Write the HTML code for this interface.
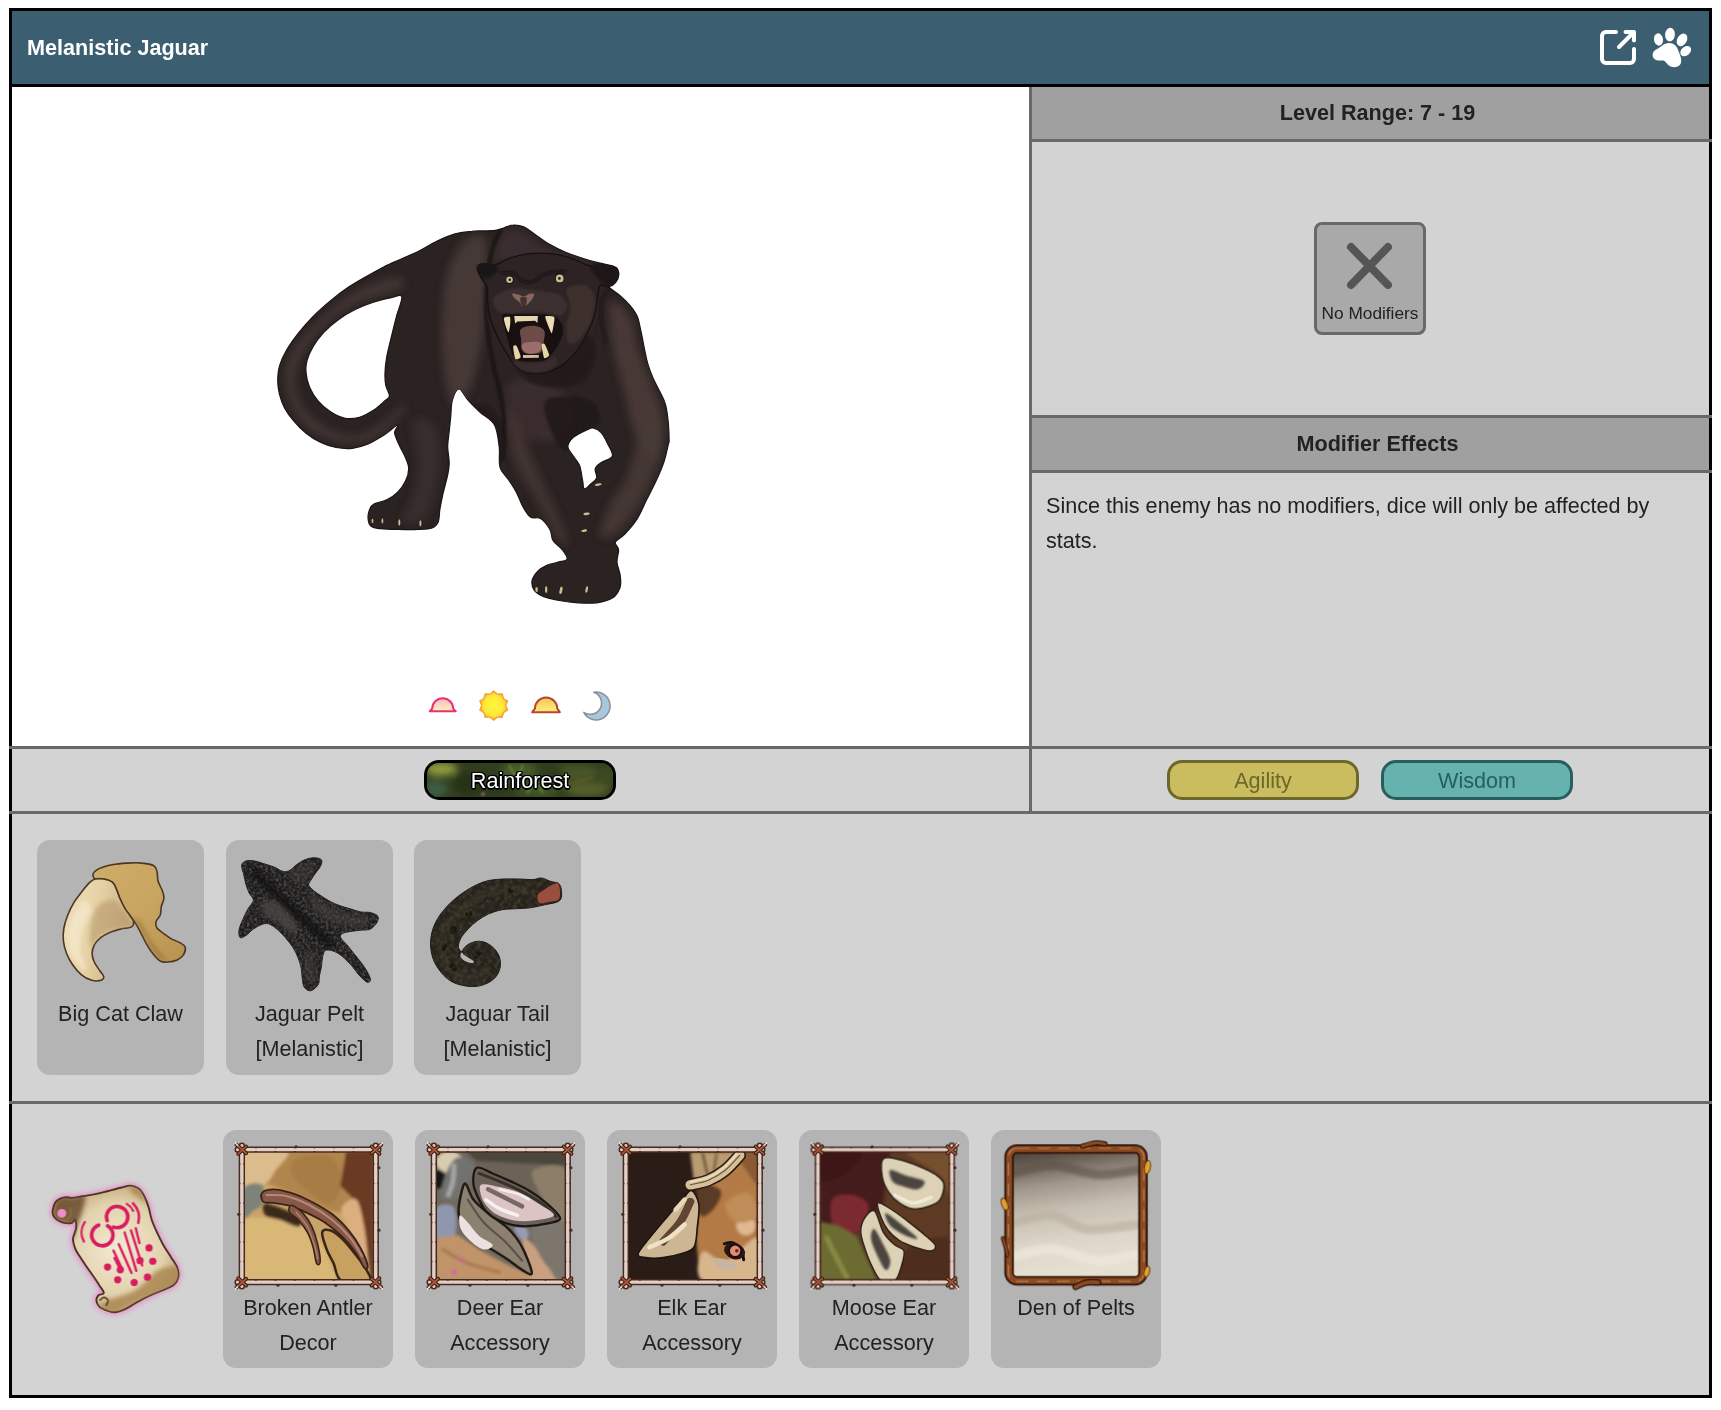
<!DOCTYPE html>
<html lang="en">
<head>
<meta charset="utf-8">
<title>Melanistic Jaguar</title>
<style>
*{box-sizing:border-box;margin:0;padding:0}
html,body{width:1721px;height:1410px;background:#fff;overflow:hidden}
body{font-family:"Liberation Sans",Arial,Helvetica,sans-serif;color:#222;position:relative}
.abs{position:absolute}
#frame{position:absolute;left:9px;top:8px;width:1703px;height:1390px;border:3px solid #000;background:#d3d3d3}
/* everything inside #inner is positioned in page coordinates via offset */
#inner{will-change:transform;position:absolute;left:-12px;top:-11px;width:1721px;height:1410px}
#hdr{left:12px;top:11px;width:1697px;height:76px;background:#3b5f71;border-bottom:3px solid #000}
#title{left:27px;top:11px;height:73px;line-height:73px;font-weight:bold;font-size:21.6px;color:#fff;white-space:nowrap}
#imgbox{left:12px;top:87px;width:1017px;height:659px;background:#fff}
.vline{left:1029px;top:87px;width:3px;height:724px;background:#696969}
.hline{height:3px;background:#696969}
.ghead{left:1032px;width:677px;height:52px;background:#a0a0a0;font-weight:bold;font-size:21.6px;line-height:52px;color:#222}
.ghead span{position:absolute;left:0;width:691px;text-align:center;white-space:nowrap}
#nomod{left:1314px;top:222px;width:112px;height:113px;border:3px solid #696969;border-radius:8px;background:#a9a9a9}
#nomod div{position:absolute;left:-10px;width:126px;top:76px;text-align:center;font-size:17.28px;line-height:24px;white-space:nowrap;color:#222}
#efftext{left:1046px;top:488px;width:648px;font-size:21.6px;line-height:35px;color:#222}
.badge{top:760px;width:192px;height:40px;border:3px solid #000;border-radius:15px;font-size:21.6px;line-height:36px;text-align:center;overflow:hidden}
.card{background:#b4b4b4;border-radius:13px}
.card .lbl{position:absolute;left:-10px;right:-10px;text-align:center;font-size:21.6px;line-height:35px;color:#222}
</style>
</head>
<body>
<div id="frame"><div id="inner">

<div id="hdr" class="abs"></div>
<div id="title" class="abs">Melanistic Jaguar</div>

<div id="imgbox" class="abs"></div>
<!--JAG-->
<svg class="abs" style="left:262px;top:212px" width="420" height="400" viewBox="262 212 420 400">
<defs>
<clipPath id="jc"><path d="M504.3 227.7C507.3 226.8 509.9 225.2 513.2 225.1C516.4 224.9 520.3 225.4 523.8 226.8C527.4 228.3 530.3 231.1 534.4 233.9C538.6 236.7 543.3 240.6 548.6 243.7C553.9 246.8 560.4 250.0 566.3 252.5C572.3 255.0 578.5 257.0 584.1 258.7C589.7 260.5 595.3 262.0 600.0 263.2C604.7 264.4 609.5 264.8 612.4 265.8C615.4 266.9 616.9 267.5 617.7 269.4C618.6 271.3 618.6 274.8 617.7 277.4C616.9 279.9 613.9 282.8 612.4 284.4C611.0 286.1 607.7 285.3 608.9 287.1C610.1 288.9 616.0 292.0 619.5 295.1C623.1 298.2 627.2 302.2 630.2 305.7C633.1 309.3 635.5 312.2 637.2 316.3C639.0 320.5 639.6 325.2 640.8 330.5C642.0 335.8 643.2 342.6 644.3 348.2C645.5 353.9 646.4 359.2 647.9 364.2C649.4 369.2 651.1 373.7 653.2 378.4C655.3 383.1 658.2 388.1 660.3 392.6C662.4 397.0 664.3 399.9 665.6 405.0C666.9 410.0 667.7 416.8 668.3 422.7C668.9 428.6 669.1 436.9 669.1 440.4C669.2 443.9 669.4 440.0 668.5 443.7C667.6 447.3 665.9 456.2 663.8 462.4C661.7 468.6 658.9 474.9 656.0 481.1C653.1 487.4 649.8 493.6 646.6 499.8C643.5 506.1 640.9 512.8 637.3 518.6C633.6 524.3 628.4 530.3 624.8 534.2C621.2 538.1 616.5 539.4 615.4 542.0C614.4 544.6 618.3 546.4 618.6 549.8C618.8 553.1 616.7 558.1 617.0 562.2C617.3 566.4 619.6 570.6 620.1 574.7C620.6 578.9 621.4 583.3 620.1 587.2C618.8 591.1 616.2 595.5 612.3 598.1C608.4 600.7 602.4 602.0 596.7 602.8C591.0 603.6 584.2 603.2 578.0 602.8C571.8 602.4 565.0 601.5 559.3 600.5C553.6 599.4 547.8 598.3 543.7 596.6C539.5 594.9 536.3 592.9 534.3 590.3C532.4 587.7 531.5 584.1 532.0 581.0C532.5 577.8 535.0 574.2 537.4 571.6C539.9 569.0 543.4 566.9 546.8 565.4C550.2 563.8 554.3 563.3 557.7 562.2C561.1 561.2 566.3 561.2 567.1 559.1C567.9 557.0 564.7 552.9 562.4 549.8C560.1 546.6 555.1 543.8 553.0 540.4C551.0 537.0 552.0 533.1 549.9 529.5C547.8 525.8 543.8 520.6 540.6 518.6C537.3 516.5 533.4 519.1 530.4 517.0C527.4 515.0 524.9 510.3 522.6 506.1C520.2 502.0 518.7 496.5 516.3 492.1C514.0 487.7 511.3 483.7 508.5 479.6C505.8 475.4 501.5 472.6 500.0 467.1C498.4 461.6 500.1 453.8 499.2 446.8C498.3 439.8 497.6 430.7 494.5 425.0C491.4 419.2 484.9 416.6 480.4 412.5C476.0 408.3 471.5 403.9 468.0 400.0C464.4 396.1 461.6 389.0 459.0 389.0C456.4 389.0 453.7 395.6 452.4 400.0C451.0 404.4 451.3 410.4 450.8 415.6C450.3 420.8 449.8 426.0 449.2 431.2C448.7 436.4 447.7 441.6 447.7 446.8C447.7 452.0 449.2 457.7 449.2 462.4C449.2 467.1 448.7 469.7 447.7 474.9C446.6 480.1 444.3 487.9 443.0 493.6C441.7 499.4 440.7 504.6 439.9 509.2C439.1 513.9 439.6 518.6 438.3 521.7C437.0 524.8 435.5 526.7 432.1 528.0C428.7 529.3 423.5 529.3 418.0 529.5C412.6 529.8 405.5 529.7 399.3 529.5C393.1 529.4 385.3 529.3 380.6 528.7C375.9 528.2 373.3 528.1 371.2 526.4C369.1 524.7 368.3 521.5 368.1 518.6C367.8 515.7 368.6 511.7 369.7 509.2C370.7 506.8 371.5 505.3 374.3 503.8C377.2 502.2 382.9 501.8 386.8 499.9C390.7 497.9 394.6 495.2 397.7 492.1C400.9 489.0 403.7 485.0 405.5 481.1C407.4 477.2 408.7 472.6 408.7 468.7C408.7 464.8 407.1 461.6 405.5 457.7C404.0 453.8 401.1 449.4 399.3 445.3C397.5 441.1 394.8 436.2 394.6 432.8C394.4 429.3 400.0 424.1 398.2 424.5C396.5 424.9 389.1 431.8 384.1 435.1C379.0 438.3 373.4 441.7 368.1 444.0C362.8 446.2 357.5 447.8 352.2 448.4C346.8 449.0 341.5 448.5 336.2 447.5C330.9 446.5 325.3 444.6 320.3 442.2C315.2 439.8 310.5 436.9 306.1 433.3C301.7 429.8 297.2 425.1 293.7 420.9C290.1 416.8 287.2 412.9 284.8 408.5C282.5 404.1 280.7 399.1 279.5 394.3C278.3 389.6 277.7 384.9 277.7 380.2C277.7 375.4 278.0 371.0 279.5 366.0C281.0 361.0 283.3 355.6 286.6 350.0C289.8 344.4 294.6 337.9 299.0 332.3C303.4 326.7 307.9 321.7 313.2 316.3C318.5 311.0 325.0 305.3 330.9 300.4C336.8 295.5 342.7 291.1 348.6 287.1C354.5 283.1 360.4 279.9 366.3 276.5C372.3 273.1 378.2 269.7 384.1 266.7C390.0 263.8 395.9 261.4 401.8 258.7C407.7 256.1 413.6 253.7 419.5 250.8C425.4 247.8 431.3 243.8 437.2 241.0C443.2 238.2 449.1 235.6 455.0 233.9C460.9 232.3 468.9 231.8 472.7 231.3C476.5 230.8 473.9 231.1 477.7 230.9C481.5 230.8 491.0 230.9 495.4 230.4C499.9 229.9 501.4 228.6 504.3 227.7ZM401.8 296.8C402.7 300.0 398.2 309.6 396.5 316.3C394.7 323.1 392.8 330.8 391.2 337.6C389.5 344.4 387.8 351.2 386.7 357.1C385.7 363.0 385.1 368.3 385.0 373.1C384.8 377.8 385.1 381.6 385.8 385.5C386.6 389.3 389.7 393.4 389.4 396.1C389.1 398.8 386.7 399.1 384.1 401.4C381.4 403.8 377.6 407.6 373.4 410.3C369.3 412.9 364.0 416.0 359.3 417.4C354.5 418.7 349.8 419.1 345.1 418.3C340.3 417.4 335.3 414.9 330.9 412.1C326.5 409.2 322.0 405.6 318.5 401.4C314.9 397.3 311.7 392.0 309.6 387.2C307.6 382.5 306.5 377.5 306.1 373.1C305.6 368.6 305.8 365.1 307.0 360.7C308.2 356.2 310.4 351.2 313.2 346.5C316.0 341.7 319.7 336.7 323.8 332.3C327.9 327.9 332.7 323.7 338.0 319.9C343.3 316.0 349.8 312.2 355.7 309.3C361.6 306.3 367.5 304.1 373.4 302.2C379.3 300.2 386.4 298.6 391.2 297.7C395.9 296.8 400.9 293.7 401.8 296.8ZM587.4 429.6C584.0 431.2 576.6 434.6 573.3 437.4C570.1 440.3 567.9 443.7 567.9 446.8C567.9 449.9 571.4 453.0 573.3 456.2C575.3 459.3 578.0 461.4 579.6 465.5C581.1 469.7 581.9 477.2 582.7 481.1C583.5 485.0 582.9 488.4 584.2 488.9C585.5 489.4 588.4 486.1 590.5 484.2C592.6 482.4 595.9 480.6 596.7 478.0C597.5 475.4 594.4 471.2 595.2 468.6C595.9 466.0 598.5 464.5 601.4 462.4C604.3 460.3 611.3 459.3 612.3 456.2C613.4 453.0 609.5 447.6 607.6 443.7C605.8 439.8 603.7 435.4 601.4 432.8C599.1 430.2 595.9 428.6 593.6 428.1C591.3 427.6 590.7 428.1 587.4 429.6Z" clip-rule="evenodd"/></clipPath>
<filter id="jb" x="-20%" y="-20%" width="140%" height="140%"><feGaussianBlur stdDeviation="4"/></filter>
<filter id="jb2" x="-20%" y="-20%" width="140%" height="140%"><feGaussianBlur stdDeviation="1.2"/></filter>
</defs>
<path d="M504.3 227.7C507.3 226.8 509.9 225.2 513.2 225.1C516.4 224.9 520.3 225.4 523.8 226.8C527.4 228.3 530.3 231.1 534.4 233.9C538.6 236.7 543.3 240.6 548.6 243.7C553.9 246.8 560.4 250.0 566.3 252.5C572.3 255.0 578.5 257.0 584.1 258.7C589.7 260.5 595.3 262.0 600.0 263.2C604.7 264.4 609.5 264.8 612.4 265.8C615.4 266.9 616.9 267.5 617.7 269.4C618.6 271.3 618.6 274.8 617.7 277.4C616.9 279.9 613.9 282.8 612.4 284.4C611.0 286.1 607.7 285.3 608.9 287.1C610.1 288.9 616.0 292.0 619.5 295.1C623.1 298.2 627.2 302.2 630.2 305.7C633.1 309.3 635.5 312.2 637.2 316.3C639.0 320.5 639.6 325.2 640.8 330.5C642.0 335.8 643.2 342.6 644.3 348.2C645.5 353.9 646.4 359.2 647.9 364.2C649.4 369.2 651.1 373.7 653.2 378.4C655.3 383.1 658.2 388.1 660.3 392.6C662.4 397.0 664.3 399.9 665.6 405.0C666.9 410.0 667.7 416.8 668.3 422.7C668.9 428.6 669.1 436.9 669.1 440.4C669.2 443.9 669.4 440.0 668.5 443.7C667.6 447.3 665.9 456.2 663.8 462.4C661.7 468.6 658.9 474.9 656.0 481.1C653.1 487.4 649.8 493.6 646.6 499.8C643.5 506.1 640.9 512.8 637.3 518.6C633.6 524.3 628.4 530.3 624.8 534.2C621.2 538.1 616.5 539.4 615.4 542.0C614.4 544.6 618.3 546.4 618.6 549.8C618.8 553.1 616.7 558.1 617.0 562.2C617.3 566.4 619.6 570.6 620.1 574.7C620.6 578.9 621.4 583.3 620.1 587.2C618.8 591.1 616.2 595.5 612.3 598.1C608.4 600.7 602.4 602.0 596.7 602.8C591.0 603.6 584.2 603.2 578.0 602.8C571.8 602.4 565.0 601.5 559.3 600.5C553.6 599.4 547.8 598.3 543.7 596.6C539.5 594.9 536.3 592.9 534.3 590.3C532.4 587.7 531.5 584.1 532.0 581.0C532.5 577.8 535.0 574.2 537.4 571.6C539.9 569.0 543.4 566.9 546.8 565.4C550.2 563.8 554.3 563.3 557.7 562.2C561.1 561.2 566.3 561.2 567.1 559.1C567.9 557.0 564.7 552.9 562.4 549.8C560.1 546.6 555.1 543.8 553.0 540.4C551.0 537.0 552.0 533.1 549.9 529.5C547.8 525.8 543.8 520.6 540.6 518.6C537.3 516.5 533.4 519.1 530.4 517.0C527.4 515.0 524.9 510.3 522.6 506.1C520.2 502.0 518.7 496.5 516.3 492.1C514.0 487.7 511.3 483.7 508.5 479.6C505.8 475.4 501.5 472.6 500.0 467.1C498.4 461.6 500.1 453.8 499.2 446.8C498.3 439.8 497.6 430.7 494.5 425.0C491.4 419.2 484.9 416.6 480.4 412.5C476.0 408.3 471.5 403.9 468.0 400.0C464.4 396.1 461.6 389.0 459.0 389.0C456.4 389.0 453.7 395.6 452.4 400.0C451.0 404.4 451.3 410.4 450.8 415.6C450.3 420.8 449.8 426.0 449.2 431.2C448.7 436.4 447.7 441.6 447.7 446.8C447.7 452.0 449.2 457.7 449.2 462.4C449.2 467.1 448.7 469.7 447.7 474.9C446.6 480.1 444.3 487.9 443.0 493.6C441.7 499.4 440.7 504.6 439.9 509.2C439.1 513.9 439.6 518.6 438.3 521.7C437.0 524.8 435.5 526.7 432.1 528.0C428.7 529.3 423.5 529.3 418.0 529.5C412.6 529.8 405.5 529.7 399.3 529.5C393.1 529.4 385.3 529.3 380.6 528.7C375.9 528.2 373.3 528.1 371.2 526.4C369.1 524.7 368.3 521.5 368.1 518.6C367.8 515.7 368.6 511.7 369.7 509.2C370.7 506.8 371.5 505.3 374.3 503.8C377.2 502.2 382.9 501.8 386.8 499.9C390.7 497.9 394.6 495.2 397.7 492.1C400.9 489.0 403.7 485.0 405.5 481.1C407.4 477.2 408.7 472.6 408.7 468.7C408.7 464.8 407.1 461.6 405.5 457.7C404.0 453.8 401.1 449.4 399.3 445.3C397.5 441.1 394.8 436.2 394.6 432.8C394.4 429.3 400.0 424.1 398.2 424.5C396.5 424.9 389.1 431.8 384.1 435.1C379.0 438.3 373.4 441.7 368.1 444.0C362.8 446.2 357.5 447.8 352.2 448.4C346.8 449.0 341.5 448.5 336.2 447.5C330.9 446.5 325.3 444.6 320.3 442.2C315.2 439.8 310.5 436.9 306.1 433.3C301.7 429.8 297.2 425.1 293.7 420.9C290.1 416.8 287.2 412.9 284.8 408.5C282.5 404.1 280.7 399.1 279.5 394.3C278.3 389.6 277.7 384.9 277.7 380.2C277.7 375.4 278.0 371.0 279.5 366.0C281.0 361.0 283.3 355.6 286.6 350.0C289.8 344.4 294.6 337.9 299.0 332.3C303.4 326.7 307.9 321.7 313.2 316.3C318.5 311.0 325.0 305.3 330.9 300.4C336.8 295.5 342.7 291.1 348.6 287.1C354.5 283.1 360.4 279.9 366.3 276.5C372.3 273.1 378.2 269.7 384.1 266.7C390.0 263.8 395.9 261.4 401.8 258.7C407.7 256.1 413.6 253.7 419.5 250.8C425.4 247.8 431.3 243.8 437.2 241.0C443.2 238.2 449.1 235.6 455.0 233.9C460.9 232.3 468.9 231.8 472.7 231.3C476.5 230.8 473.9 231.1 477.7 230.9C481.5 230.8 491.0 230.9 495.4 230.4C499.9 229.9 501.4 228.6 504.3 227.7ZM401.8 296.8C402.7 300.0 398.2 309.6 396.5 316.3C394.7 323.1 392.8 330.8 391.2 337.6C389.5 344.4 387.8 351.2 386.7 357.1C385.7 363.0 385.1 368.3 385.0 373.1C384.8 377.8 385.1 381.6 385.8 385.5C386.6 389.3 389.7 393.4 389.4 396.1C389.1 398.8 386.7 399.1 384.1 401.4C381.4 403.8 377.6 407.6 373.4 410.3C369.3 412.9 364.0 416.0 359.3 417.4C354.5 418.7 349.8 419.1 345.1 418.3C340.3 417.4 335.3 414.9 330.9 412.1C326.5 409.2 322.0 405.6 318.5 401.4C314.9 397.3 311.7 392.0 309.6 387.2C307.6 382.5 306.5 377.5 306.1 373.1C305.6 368.6 305.8 365.1 307.0 360.7C308.2 356.2 310.4 351.2 313.2 346.5C316.0 341.7 319.7 336.7 323.8 332.3C327.9 327.9 332.7 323.7 338.0 319.9C343.3 316.0 349.8 312.2 355.7 309.3C361.6 306.3 367.5 304.1 373.4 302.2C379.3 300.2 386.4 298.6 391.2 297.7C395.9 296.8 400.9 293.7 401.8 296.8ZM587.4 429.6C584.0 431.2 576.6 434.6 573.3 437.4C570.1 440.3 567.9 443.7 567.9 446.8C567.9 449.9 571.4 453.0 573.3 456.2C575.3 459.3 578.0 461.4 579.6 465.5C581.1 469.7 581.9 477.2 582.7 481.1C583.5 485.0 582.9 488.4 584.2 488.9C585.5 489.4 588.4 486.1 590.5 484.2C592.6 482.4 595.9 480.6 596.7 478.0C597.5 475.4 594.4 471.2 595.2 468.6C595.9 466.0 598.5 464.5 601.4 462.4C604.3 460.3 611.3 459.3 612.3 456.2C613.4 453.0 609.5 447.6 607.6 443.7C605.8 439.8 603.7 435.4 601.4 432.8C599.1 430.2 595.9 428.6 593.6 428.1C591.3 427.6 590.7 428.1 587.4 429.6Z" fill="#2b2222" fill-rule="evenodd" stroke="#1b1415" stroke-width="1.2" stroke-linejoin="round"/>
<g clip-path="url(#jc)">
<g filter="url(#jb)"><path d="M463.5 241.9C470.0 234.8 481.0 231.9 484.8 238.4C488.7 244.9 486.9 264.9 486.6 280.9C486.3 296.8 485.7 316.3 483.0 334.1C480.4 351.8 475.7 375.4 470.6 387.2C465.6 399.1 457.6 410.9 452.9 405.0C448.2 399.1 443.5 372.5 442.3 351.8C441.1 331.1 442.3 299.2 445.8 280.9C449.4 262.6 457.0 249.0 463.5 241.9Z" fill="#483a38" opacity="0.9"/><path d="M610.7 302.2C613.6 297.4 625.4 308.1 630.2 316.3C634.9 324.6 635.2 340.0 639.0 351.8C642.9 363.6 649.1 375.4 653.2 387.2C657.3 399.1 662.9 410.9 663.8 422.7C664.7 434.5 662.9 455.2 658.5 458.1C654.1 461.1 643.2 452.2 637.2 440.4C631.3 428.6 627.2 403.2 623.1 387.2C618.9 371.3 614.5 358.9 612.4 344.7C610.4 330.5 607.7 306.9 610.7 302.2Z" fill="#4a3b38" opacity="0.9"/><path d="M506.1 387.2C508.7 378.4 524.4 376.9 534.4 378.4C544.5 379.9 559.8 388.7 566.3 396.1C572.8 403.5 575.8 415.3 573.4 422.7C571.1 430.1 561.3 438.9 552.2 440.4C543.0 441.9 526.2 440.4 518.5 431.6C510.8 422.7 503.4 396.1 506.1 387.2Z" fill="#3e3030" opacity="0.8"/><path d="M500.8 234.8C504.6 229.5 511.4 227.7 518.5 229.5C525.6 231.3 534.7 240.7 543.3 245.4C551.9 250.2 561.3 254.3 569.9 257.9C578.5 261.4 592.3 262.3 594.7 266.7C597.1 271.1 591.7 284.1 584.1 284.4C576.4 284.7 560.4 272.0 548.6 268.5C536.8 264.9 522.0 264.4 513.2 263.2C504.3 262.0 497.5 266.1 495.4 261.4C493.4 256.7 496.9 240.1 500.8 234.8Z" fill="#3d3132" opacity="0.8"/><path d="M566.3 289.8C571.1 285.0 587.6 287.7 591.2 295.1C594.7 302.5 591.2 324.0 587.6 334.1C584.1 344.1 574.0 357.1 569.9 355.3C565.8 353.6 563.4 334.4 562.8 323.4C562.2 312.5 561.6 294.5 566.3 289.8Z" fill="#3f3131" opacity="0.8"/><path d="M318.5 319.9C327.4 311.9 339.5 300.4 352.2 293.3C364.9 286.2 386.4 278.2 394.7 277.4C403.0 276.5 407.7 283.9 401.8 288.0C395.9 292.1 371.7 296.3 359.3 302.2C346.8 308.1 336.5 315.2 327.4 323.4C318.2 331.7 309.6 342.3 304.3 351.8C299.0 361.2 295.4 370.7 295.4 380.2C295.4 389.6 298.4 400.2 304.3 408.5C310.2 416.8 321.7 425.3 330.9 429.8C340.1 434.2 349.8 436.9 359.3 435.1C368.7 433.3 380.2 424.5 387.6 419.1C395.0 413.8 401.2 404.1 403.6 403.2C405.9 402.3 406.8 407.9 401.8 413.8C396.8 419.7 383.5 433.9 373.4 438.6C363.4 443.4 352.5 444.0 341.5 442.2C330.6 440.4 316.7 435.4 307.9 428.0C299.0 420.6 291.9 408.2 288.4 397.9C284.8 387.5 284.8 375.4 286.6 366.0C288.4 356.5 293.7 348.8 299.0 341.2C304.3 333.5 309.6 327.9 318.5 319.9Z" fill="#473937" opacity="0.85"/><path d="M505.4 409.4C506.5 403.6 516.1 418.7 521.0 428.1C526.0 437.5 529.3 452.0 535.1 465.5C540.8 479.1 549.9 496.8 555.4 509.2C560.8 521.7 567.3 535.2 567.8 540.4C568.4 545.7 563.7 547.2 558.5 540.4C553.3 533.7 543.9 512.9 536.6 499.9C529.3 486.9 520.0 477.5 514.8 462.4C509.6 447.3 504.4 415.1 505.4 409.4Z" fill="#443634" opacity="0.85"/><path d="M640.4 431.2C645.6 422.9 655.5 421.8 659.1 425.0C662.8 428.1 663.8 440.0 662.2 449.9C660.7 459.8 654.4 473.8 649.8 484.2C645.1 494.6 639.9 504.0 634.2 512.3C628.4 520.6 621.2 530.5 615.4 534.2C609.7 537.8 600.4 539.9 599.8 534.2C599.3 528.4 607.6 509.7 612.3 499.8C617.0 490.0 623.2 486.3 627.9 474.9C632.6 463.4 635.2 439.5 640.4 431.2Z" fill="#483937" opacity="0.85"/><path d="M413.3 421.8C415.9 415.6 429.2 418.7 433.6 425.0C438.1 431.2 439.9 447.3 439.9 459.3C439.9 471.3 436.2 486.9 433.6 496.8C431.0 506.6 429.5 514.4 424.3 518.6C419.1 522.8 404.2 525.9 402.4 521.7C400.6 517.6 410.7 503.5 413.3 493.6C415.9 483.7 418.0 474.4 418.0 462.4C418.0 450.5 410.7 428.1 413.3 421.8Z" fill="#3c2f2f" opacity="0.8"/></g>
<g filter="url(#jb2)"><path d="M500.8 229.5C499.3 233.0 494.3 241.6 491.9 250.8C489.5 259.9 487.5 272.3 486.6 284.4C485.7 296.6 485.4 309.8 486.6 323.4C487.8 337.0 491.0 352.4 493.7 366.0C496.3 379.6 500.8 392.6 502.5 405.0C504.3 417.4 504.3 431.3 504.3 440.4C504.3 449.6 502.8 456.7 502.5 459.9" stroke="#171112" stroke-width="3" fill="none" opacity="0.9"/><path d="M608.9 288.0C607.7 290.3 603.0 296.3 601.8 302.2C600.6 308.1 600.9 316.3 601.8 323.4C602.7 330.5 606.2 341.2 607.1 344.7" stroke="#1a1314" stroke-width="2" fill="none" opacity="0.7"/><path d="M518.5 364.2C521.1 362.1 535.3 369.2 543.3 367.7C551.3 366.3 559.6 361.0 566.3 355.3C573.1 349.7 579.3 334.7 584.1 334.1C588.8 333.5 594.7 344.1 594.7 351.8C594.7 359.5 591.2 374.2 584.1 380.2C577.0 386.1 561.6 387.2 552.2 387.2C542.7 387.2 533.0 384.0 527.4 380.2C521.7 376.3 515.8 366.3 518.5 364.2Z" fill="#1f1718" opacity="0.8"/><path d="M460.0 419.1C461.8 410.0 474.5 404.4 481.3 405.0C488.1 405.6 497.2 413.5 500.8 422.7C504.3 431.8 507.6 453.7 502.5 459.9C497.5 466.1 477.7 466.7 470.6 459.9C463.5 453.1 458.2 428.3 460.0 419.1Z" fill="#1e1617" opacity="0.8"/><path d="M546.8 400.0C552.8 394.8 578.5 396.9 587.4 400.0C596.2 403.1 599.8 414.0 599.8 418.7C599.8 423.4 592.0 425.2 587.4 428.1C582.7 430.9 575.4 432.2 571.8 435.9C568.1 439.5 568.9 450.7 565.5 449.9C562.1 449.1 554.6 439.5 551.5 431.2C548.4 422.9 540.8 405.2 546.8 400.0Z" fill="#1c1516" opacity="0.85"/></g>
</g>
<path d="M477.4 267.7C477.7 265.3 480.2 264.3 483.0 263.9C485.8 263.6 489.8 266.3 494.2 265.3C498.5 264.4 503.2 260.3 509.0 258.4C514.9 256.4 522.7 254.5 529.5 253.7C536.3 252.9 543.4 253.1 550.0 253.7C556.5 254.3 561.9 255.4 568.5 257.4C575.2 259.5 584.7 264.6 589.9 265.8C595.2 267.0 596.0 264.6 600.2 264.9C604.3 265.2 611.9 266.1 615.0 267.7C618.1 269.2 618.7 271.7 618.8 274.2C618.8 276.7 617.2 280.4 615.5 282.5C613.8 284.6 611.1 286.3 608.5 286.7C606.0 287.2 602.0 283.4 600.2 285.3C598.3 287.3 598.3 293.4 597.4 298.3C596.4 303.3 596.3 309.2 594.6 315.1C592.9 321.0 590.6 327.2 587.1 333.7C583.7 340.2 578.8 348.5 574.1 354.1C569.5 359.7 564.2 364.0 559.3 367.1C554.3 370.2 549.6 371.8 544.4 372.7C539.1 373.7 532.3 373.7 527.6 372.7C523.0 371.8 519.9 370.2 516.5 367.1C513.1 364.0 510.3 359.1 507.2 354.1C504.1 349.2 500.7 343.3 497.9 337.4C495.1 331.5 492.2 324.7 490.5 318.8C488.7 312.9 488.2 307.3 487.7 302.1C487.1 296.8 488.3 291.2 487.2 287.2C486.1 283.2 482.8 281.1 481.2 277.9C479.5 274.6 477.1 270.0 477.4 267.7Z" fill="#2d2324" stroke="#171011" stroke-width="1.3"/>
<g clip-path="url(#jc)"><g filter="url(#jb2)"><path d="M493.2 298.3C494.8 294.8 502.4 291.5 507.2 290.0C512.0 288.4 516.5 288.9 522.1 289.0C527.6 289.2 534.5 290.0 540.7 290.9C546.9 291.8 554.9 292.1 559.3 294.6C563.6 297.1 566.4 302.4 566.7 305.8C567.0 309.2 564.8 314.0 561.1 315.1C557.4 316.2 550.3 312.8 544.4 312.3C538.5 311.8 531.7 312.1 525.8 312.3C519.9 312.4 513.7 313.4 509.0 313.2C504.4 313.1 500.5 313.8 497.9 311.4C495.3 308.9 491.7 301.9 493.2 298.3Z" fill="#3f3232" opacity="0.9"/><path d="M566.7 289.0C569.2 285.3 580.6 283.8 585.3 285.3C589.9 286.9 593.7 292.5 594.6 298.3C595.5 304.2 593.3 313.8 590.9 320.7C588.4 327.5 583.4 335.5 579.7 339.3C576.0 343.0 570.7 345.5 568.5 343.0C566.4 340.5 566.4 330.3 566.7 324.4C567.0 318.5 570.4 313.5 570.4 307.6C570.4 301.8 564.2 292.8 566.7 289.0Z" fill="#40322f" opacity="0.85"/><path d="M514.6 360.6C516.8 360.1 524.2 362.9 529.5 363.0C534.8 363.0 542.2 362.3 546.2 361.1C550.3 359.9 551.8 355.6 553.7 356.0C555.5 356.4 558.9 360.8 557.4 363.4C555.8 366.1 549.3 370.4 544.4 371.8C539.4 373.2 532.3 372.7 527.6 371.8C523.0 370.9 518.7 368.1 516.5 366.2C514.3 364.4 512.5 361.2 514.6 360.6Z" fill="#3a2e2e" opacity="0.9"/><path d="M477.4 267.2C477.6 264.9 480.2 264.2 483.0 263.9C485.8 263.7 491.7 264.8 494.2 265.8C496.7 266.8 498.7 268.1 497.9 270.0C497.1 271.8 492.2 275.6 489.5 277.0C486.9 278.3 484.1 279.5 482.1 277.9C480.1 276.3 477.3 269.5 477.4 267.2Z" fill="#191213"/><path d="M589.9 267.2C590.9 265.8 596.0 265.0 600.2 265.1C604.3 265.2 612.0 266.3 615.0 267.9C618.1 269.4 618.6 271.9 618.6 274.4C618.6 276.8 616.9 280.5 615.0 282.5C613.2 284.6 610.1 286.7 607.6 286.4C605.1 286.2 602.3 283.3 600.2 281.1C598.0 278.9 596.3 275.6 594.6 273.2C592.9 270.9 589.0 268.6 589.9 267.2Z" fill="#1c1415"/><path d="M500.7 273.2C502.8 273.2 510.1 272.0 513.7 273.2C517.3 274.5 518.8 279.3 522.1 280.7C525.3 282.1 529.5 282.7 533.2 281.6C536.9 280.5 538.8 275.9 544.4 274.2C550.0 272.5 563.0 271.8 566.7 271.4" stroke="#130e0e" stroke-width="2.2" fill="none" opacity="0.8"/></g></g>
<path d="M502.5 315.1C504.2 312.9 510.4 314.3 514.6 314.2C518.8 314.0 523.3 314.2 527.6 314.2C532.0 314.2 536.3 313.8 540.7 314.2C545.0 314.5 550.3 314.6 553.7 316.0C557.1 317.4 559.6 319.9 561.1 322.5C562.7 325.2 563.3 328.4 563.0 331.8C562.7 335.2 561.1 339.3 559.3 343.0C557.4 346.7 554.3 351.2 551.8 354.1C549.3 357.1 548.1 359.4 544.4 360.6C540.7 361.9 534.2 361.7 529.5 361.6C524.9 361.4 519.6 361.6 516.5 359.7C513.4 357.8 512.5 354.0 510.9 350.4C509.4 346.8 508.3 342.2 507.2 338.3C506.1 334.4 505.2 331.0 504.4 327.2C503.6 323.3 500.8 317.2 502.5 315.1Z" fill="#170f10"/>
<path d="M520.2 330.0C521.3 327.8 524.9 326.9 527.6 326.2C530.4 325.6 534.2 325.5 536.9 326.2C539.7 327.0 543.3 328.1 544.4 330.9C545.5 333.7 544.1 339.4 543.4 343.0C542.8 346.5 543.0 350.4 540.7 352.3C538.3 354.1 532.6 354.4 529.5 354.1C526.4 353.8 523.5 352.9 522.1 350.4C520.7 347.9 521.4 342.7 521.1 339.3C520.8 335.8 519.1 332.1 520.2 330.0Z" fill="#6c4b49"/><path d="M522.5 343.9C523.9 342.6 528.3 342.2 531.4 342.0C534.4 341.9 539.3 341.4 540.7 343.0C542.1 344.5 541.6 349.6 539.7 351.3C537.9 353.1 532.3 353.9 529.5 353.7C526.7 353.4 524.2 351.6 523.0 349.9C521.8 348.3 521.1 345.2 522.5 343.9Z" fill="#9a6c6a"/>
<path d="M514.2 316.0L537.9 316.0L537.4 323.0L535.1 320.7L517.4 321.4L515.1 323.6Z" fill="#e6d6ad"/><path d="M523.0 355.1L538.8 354.9L538.8 357.8L523.0 358.0Z" fill="#cdbf9d"/>
<path d="M503.9 317.9C504.3 316.8 509.4 316.3 510.0 316.9C510.6 317.6 510.3 322.8 510.2 324.4C510.0 325.9 509.0 332.0 508.6 332.3C508.2 332.6 506.5 328.6 506.1 327.2C505.6 325.7 503.5 318.9 503.9 317.9Z" fill="#ecdcb2"/><path d="M545.3 316.5C545.8 315.5 553.3 316.1 554.1 316.9C555.0 317.7 553.9 322.8 553.7 324.4C553.4 326.0 552.3 332.9 551.8 333.2C551.3 333.5 549.5 328.8 548.8 327.2C548.2 325.5 544.8 317.5 545.3 316.5Z" fill="#ecdcb2"/><path d="M513.2 346.7C513.3 345.4 515.7 344.7 516.5 345.8C517.2 346.8 520.8 355.6 520.7 356.9C520.6 358.2 516.1 360.0 515.4 359.0C514.6 357.9 513.1 348.0 513.2 346.7Z" fill="#e6d4a8"/><path d="M541.6 344.8C541.6 343.4 543.8 342.9 544.6 343.9C545.3 344.9 549.2 353.6 549.2 355.1C549.2 356.5 545.0 359.1 544.2 358.0C543.4 357.0 541.6 346.2 541.6 344.8Z" fill="#e6d4a8"/>
<path d="M512.3 293.7C512.9 293.1 516.4 294.2 518.3 294.6C520.3 295.1 522.1 296.6 523.9 296.5C525.8 296.3 527.8 294.1 529.5 293.7C531.2 293.3 533.8 293.1 534.2 294.2C534.5 295.2 532.8 298.3 531.4 300.2C530.0 302.1 527.3 304.7 525.8 305.8C524.2 306.9 523.1 307.3 522.1 306.7C521.0 306.1 520.5 303.5 519.3 302.1C518.0 300.7 515.8 299.7 514.6 298.3C513.5 297.0 511.7 294.3 512.3 293.7Z" fill="#86655e"/><path d="M520.2 298.3C520.5 296.7 522.8 297.0 523.9 297.0C525.0 297.0 526.4 296.9 526.7 298.3C527.0 299.8 526.6 304.4 525.8 305.8C525.0 307.2 523.0 308.0 522.1 306.7C521.1 305.5 519.9 300.0 520.2 298.3Z" fill="#2a1c1c" opacity="0.7"/>
<circle cx="509.5" cy="279.8" r="4.2" fill="#15100f"/><circle cx="559.7" cy="278.4" r="4.8" fill="#15100f"/><circle cx="509.5" cy="279.8" r="3.3" fill="#cbbb92"/><circle cx="559.7" cy="278.4" r="3.9" fill="#cbbb92"/><circle cx="509.8" cy="279.8" r="1.2" fill="#1a1412"/><circle cx="559.4" cy="278.4" r="1.3" fill="#1a1412"/>
<ellipse cx="372.5" cy="520.9" rx="0.9" ry="2.2" fill="#cdbb93" transform="rotate(0 372.5 520.9)"/><ellipse cx="382.4" cy="520.9" rx="0.9" ry="2.6" fill="#cdbb93" transform="rotate(0 382.4 520.9)"/><ellipse cx="399.3" cy="522.5" rx="1" ry="3.2" fill="#cdbb93" transform="rotate(0 399.3 522.5)"/><ellipse cx="420.4" cy="523.3" rx="1" ry="3" fill="#cdbb93" transform="rotate(0 420.4 523.3)"/><ellipse cx="536.9" cy="589.6" rx="0.9" ry="2.6" fill="#cdbb93" transform="rotate(0 536.9 589.6)"/><ellipse cx="546.3" cy="589.6" rx="1" ry="3.4" fill="#cdbb93" transform="rotate(0 546.3 589.6)"/><ellipse cx="560.8" cy="590.4" rx="1.2" ry="3.6" fill="#cdbb93" transform="rotate(10 560.8 590.4)"/><ellipse cx="536.2" cy="589.5" rx="0.8" ry="2.4" fill="#cdbb93" transform="rotate(0 536.2 589.5)"/><ellipse cx="546.0" cy="589.5" rx="0.9" ry="3" fill="#cdbb93" transform="rotate(0 546.0 589.5)"/><ellipse cx="561.2" cy="590.3" rx="1.2" ry="3.6" fill="#cdbb93" transform="rotate(10 561.2 590.3)"/><ellipse cx="586.7" cy="589.5" rx="1.2" ry="3.4" fill="#cdbb93" transform="rotate(10 586.7 589.5)"/><ellipse cx="598.3" cy="484.6" rx="3.4" ry="1.1" fill="#cdbb93" transform="rotate(-10 598.3 484.6)"/><ellipse cx="586.6" cy="513.9" rx="3.2" ry="1.3" fill="#cdbb93" transform="rotate(-5 586.6 513.9)"/><ellipse cx="584.2" cy="530.7" rx="3" ry="1.2" fill="#cdbb93" transform="rotate(-10 584.2 530.7)"/>
</svg>
<!--/JAG-->
<!--ICONS-->
<svg class="abs" style="left:1590px;top:20px" width="112" height="56" viewBox="1590 20 112 56">
 <g fill="none" stroke="#fff" stroke-width="4" stroke-linecap="round" stroke-linejoin="round">
  <path d="M1616 32H1606a4 4 0 0 0-4 4V59a4 4 0 0 0 4 4H1630a4 4 0 0 0 4-4V49"/>
  <path d="M1619 47L1634 32M1625.500 32H1634V40.500"/>
 </g>
 <g fill="#fff">
  <ellipse cx="1658.5" cy="39.5" rx="4.5" ry="6.2" transform="rotate(-10 1658.5 39.5)"/>
  <ellipse cx="1670" cy="34.6" rx="4.9" ry="6.8" transform="rotate(5 1670 34.6)"/>
  <ellipse cx="1682" cy="39.9" rx="4.8" ry="6.8" transform="rotate(30 1682 39.9)"/>
  <ellipse cx="1685.7" cy="51.2" rx="4.4" ry="6" transform="rotate(50 1685.7 51.2)"/>
  <path d="M1669 43C1664 43 1661 47 1657 49C1653 51 1652 54 1653 57C1654 60 1658 61 1662 60.500C1665 60 1666 63 1669 65.500C1672 68 1678 68 1680.500 64C1682.500 60 1680 55 1678.500 51C1677 46 1674 43 1669 43Z"/>
 </g>
</svg>
<svg class="abs" style="left:420px;top:685px" width="200" height="42" viewBox="420 685 200 42">
 <defs>
  <linearGradient id="gsr" x1="0" y1="0" x2="0" y2="1"><stop offset="0" stop-color="#f8b8c6"/><stop offset="1" stop-color="#fff3c0"/></linearGradient>
  <linearGradient id="gss" x1="0" y1="0" x2="0" y2="1"><stop offset="0" stop-color="#f6c35a"/><stop offset="1" stop-color="#fff07a"/></linearGradient>
  <radialGradient id="gsun" cx="0.5" cy="0.5" r="0.5"><stop offset="0" stop-color="#fff63a"/><stop offset="0.7" stop-color="#ffe83a"/><stop offset="1" stop-color="#f7a933"/></radialGradient>
 </defs>
 <path d="M429.700 711.300H455.700L453.200 708.700A10.500 10.500 0 0 0 432.200 708.700Z" fill="url(#gsr)" stroke="#e8336f" stroke-width="2" stroke-linejoin="round"/>
 <polygon points="493.7,691.0 497.4,694.2 502.3,693.8 503.4,698.5 507.6,701.1 505.7,705.6 507.6,710.1 503.4,712.7 502.3,717.4 497.4,717.0 493.7,720.2 490.0,717.0 485.1,717.4 484.0,712.7 479.8,710.1 481.7,705.6 479.8,701.1 484.0,698.5 485.1,693.8 490.0,694.2" fill="url(#gsun)" stroke="#f5a02a" stroke-width="1.200" stroke-linejoin="round"/>
 <path d="M532.200 712.200H559.800L557.300 708.700A11.200 11.200 0 0 0 534.900 708.700Z" fill="url(#gss)" stroke="#b5472f" stroke-width="2" stroke-linejoin="round"/>
 <path d="M593.8 692.3A13.9 13.9 0 1 1 583.8 712.3A11.3 11.3 0 1 0 593.8 692.3Z" fill="#a9c8de" stroke="#8a9096" stroke-width="1.500" stroke-linejoin="round"/>
</svg>
<!--/ICONS-->

<div class="abs vline"></div>
<div class="abs ghead" style="top:87px"><span>Level Range: 7 - 19</span></div>
<div class="abs hline" style="left:1032px;top:139px;width:680px"></div>
<div id="nomod" class="abs"><svg class="abs" style="left:23px;top:11px" width="60" height="60" viewBox="1340 236 60 60">
 <path d="M1351 247L1388 285M1388 247L1351 285" stroke="#555" stroke-width="8" stroke-linecap="round" fill="none"/>
</svg><div>No Modifiers</div></div>
<div class="abs hline" style="left:1032px;top:415px;width:680px"></div>
<div class="abs ghead" style="top:418px"><span>Modifier Effects</span></div>
<div class="abs hline" style="left:1032px;top:470px;width:680px"></div>
<div id="efftext" class="abs">Since this enemy has no modifiers, dice will only be affected by stats.</div>

<div class="abs hline" style="left:9px;top:746px;width:1703px"></div>
<div class="abs badge" style="left:424px;background:#33401f;color:#fff"><svg class="abs" style="left:0;top:0" width="186" height="34" viewBox="0 0 186 34"><defs><filter id="rb" x="-20%" y="-50%" width="140%" height="200%"><feGaussianBlur stdDeviation="3.5"/></filter><filter id="rb2" x="-20%" y="-50%" width="140%" height="200%"><feGaussianBlur stdDeviation="1.2"/></filter></defs><rect width="186" height="34" fill="#323f1e"/><g filter="url(#rb)"><ellipse cx="14" cy="6" rx="16" ry="7" fill="#8d9a3e"/><ellipse cx="8" cy="26" rx="12" ry="9" fill="#3d5c44"/><ellipse cx="42" cy="20" rx="16" ry="12" fill="#263319"/><ellipse cx="92" cy="8" rx="18" ry="9" fill="#465c29"/><ellipse cx="110" cy="28" rx="20" ry="7" fill="#3f5427"/><ellipse cx="70" cy="26" rx="14" ry="7" fill="#2a381b"/><ellipse cx="150" cy="10" rx="22" ry="8" fill="#4a5426"/><ellipse cx="160" cy="26" rx="22" ry="7" fill="#55602a"/><ellipse cx="128" cy="14" rx="10" ry="8" fill="#2c3a1c"/><ellipse cx="180" cy="14" rx="8" ry="10" fill="#3c4a22"/></g><g filter="url(#rb2)"><path d="M82 2L90 16L96 2M100 30L108 18L116 30" stroke="#5c7a34" stroke-width="2.500" fill="none"/><path d="M138 22L166 14" stroke="#6a5a30" stroke-width="1.500"/><circle cx="56" cy="31" r="1.500" fill="#c070a0"/></g></svg><span style="position:relative;text-shadow:-1.500px 0 #000,1.500px 0 #000,0 -1.500px #000,0 1.500px #000,-1px -1px #000,1px -1px #000,-1px 1px #000,1px 1px #000">Rainforest</span></div>
<div class="abs badge" style="left:1167px;background:#c9bd5f;border-color:#6e672a;color:#6e672a">Agility</div>
<div class="abs badge" style="left:1381px;background:#66b2ae;border-color:#265f5c;color:#265f5c">Wisdom</div>
<div class="abs hline" style="left:9px;top:811px;width:1703px"></div>

<div class="abs card" style="left:37px;top:840px;width:167px;height:235px"><div class="lbl" style="top:155.5px">Big Cat Claw</div></div>
<div class="abs card" style="left:226px;top:840px;width:167px;height:235px"><div class="lbl" style="top:155.5px">Jaguar Pelt<br>[Melanistic]</div></div>
<div class="abs card" style="left:414px;top:840px;width:167px;height:235px"><div class="lbl" style="top:155.5px">Jaguar Tail<br>[Melanistic]</div></div>

<!--ITEMS-->
<svg class="abs" style="left:37px;top:840px" width="545" height="160" viewBox="37 840 545 160">
<defs>
<linearGradient id="cg" x1="0" y1="0" x2="1" y2="0.3"><stop offset="0" stop-color="#f0dfba"/><stop offset="0.5" stop-color="#e6d2a6"/><stop offset="1" stop-color="#cdb283"/></linearGradient>
<linearGradient id="bg1" x1="0" y1="0" x2="1" y2="1"><stop offset="0" stop-color="#cfae69"/><stop offset="0.5" stop-color="#c8a560"/><stop offset="1" stop-color="#b89250"/></linearGradient>
<filter id="ib" x="-30%" y="-30%" width="160%" height="160%"><feGaussianBlur stdDeviation="2.2"/></filter>
<filter id="ib1" x="-30%" y="-30%" width="160%" height="160%"><feGaussianBlur stdDeviation="0.7"/></filter>
<filter id="nz" x="0" y="0" width="100%" height="100%" color-interpolation-filters="sRGB"><feTurbulence type="fractalNoise" baseFrequency="0.38" numOctaves="2" seed="4" result="t"/><feColorMatrix in="t" type="matrix" values="0 0 0 0 0.30  0 0 0 0 0.28  0 0 0 0 0.27  2.6 0 0 0 -1.0"/><feComposite in2="SourceGraphic" operator="in"/></filter>
<filter id="nz2" x="0" y="0" width="100%" height="100%" color-interpolation-filters="sRGB"><feTurbulence type="fractalNoise" baseFrequency="0.22" numOctaves="2" seed="9" result="t"/><feColorMatrix in="t" type="matrix" values="0 0 0 0 0.27  0 0 0 0 0.25  0 0 0 0 0.19  2.6 0 0 0 -1.0"/><feComposite in2="SourceGraphic" operator="in"/></filter>
<clipPath id="kc"><path d="M95.3 879.0C97.6 878.5 101.0 878.5 103.8 879.0C106.7 879.6 110.2 880.5 112.3 882.2C114.5 884.0 115.4 887.0 116.6 889.7C117.8 892.3 118.4 895.0 119.8 898.2C121.2 901.4 123.3 905.8 125.1 908.8C126.9 911.8 129.0 914.1 130.4 916.3C131.8 918.4 133.4 919.8 133.6 921.6C133.8 923.4 133.6 925.7 131.5 926.9C129.4 928.2 124.4 928.2 120.9 929.0C117.3 929.9 113.6 930.8 110.2 932.2C106.8 933.7 103.3 935.4 100.6 937.6C98.0 939.7 95.7 942.3 94.3 945.0C92.8 947.7 92.1 950.7 92.1 953.5C92.1 956.3 93.0 959.2 94.3 962.0C95.5 964.9 98.0 968.0 99.6 970.5C101.2 973.0 103.8 975.2 103.8 976.9C103.8 978.6 101.7 980.1 99.6 980.6C97.4 981.2 94.1 981.1 91.1 980.1C88.0 979.1 84.5 977.3 81.5 974.8C78.5 972.3 75.5 968.8 73.0 965.2C70.5 961.7 68.2 957.6 66.6 953.5C65.0 949.4 63.8 945.0 63.4 940.7C63.0 936.5 63.2 932.2 63.9 928.0C64.6 923.7 66.0 919.5 67.7 915.2C69.3 911.0 71.6 906.5 74.0 902.4C76.5 898.4 79.9 894.1 82.6 890.7C85.2 887.4 87.9 884.2 90.0 882.2C92.1 880.3 93.0 879.6 95.3 879.0Z"/></clipPath><clipPath id="bc"><path d="M93.2 873.7C93.9 872.0 96.4 869.9 99.6 868.4C102.8 866.9 107.7 865.6 112.3 864.7C117.0 863.8 122.3 863.4 127.2 863.1C132.2 862.8 137.7 862.6 142.1 863.1C146.6 863.5 151.3 864.3 153.8 865.7C156.3 867.2 156.3 869.0 157.0 871.6C157.7 874.2 157.2 878.0 158.1 881.2C159.0 884.4 161.4 887.9 162.3 890.7C163.3 893.6 164.1 895.5 163.9 898.2C163.8 900.9 161.9 903.9 161.3 906.7C160.7 909.5 161.1 912.7 160.2 915.2C159.3 917.7 156.5 919.5 156.0 921.6C155.4 923.7 155.8 926.0 157.0 928.0C158.3 929.9 161.1 931.5 163.4 933.3C165.7 935.1 168.0 937.0 170.9 938.6C173.7 940.2 178.0 941.5 180.4 942.9C182.8 944.3 184.7 945.2 185.2 947.1C185.7 949.1 184.9 952.4 183.6 954.6C182.3 956.7 179.9 958.7 177.2 959.9C174.6 961.1 170.5 961.8 167.7 962.0C164.8 962.2 162.7 962.4 160.2 961.0C157.7 959.5 155.1 956.3 152.8 953.5C150.5 950.7 148.3 947.3 146.4 943.9C144.4 940.6 142.8 936.7 141.1 933.3C139.3 929.9 137.5 926.6 135.7 923.7C134.0 920.9 132.2 918.8 130.4 916.3C128.7 913.8 126.9 911.8 125.1 908.8C123.3 905.8 121.2 901.4 119.8 898.2C118.4 895.0 117.8 892.3 116.6 889.7C115.4 887.0 114.5 884.0 112.3 882.2C110.2 880.5 106.7 879.6 103.8 879.0C101.0 878.5 97.1 879.9 95.3 879.0C93.5 878.2 92.5 875.5 93.2 873.7Z"/></clipPath>
<clipPath id="pc"><path d="M241.7 865.2C242.1 862.9 243.8 861.7 246.0 861.0C248.1 860.2 251.3 860.4 254.5 861.0C257.7 861.5 261.7 863.1 265.1 864.1C268.5 865.2 271.7 866.1 274.7 867.3C277.7 868.6 280.7 871.1 283.2 871.6C285.7 872.1 287.4 871.6 289.6 870.5C291.7 869.5 293.5 867.0 296.0 865.2C298.4 863.4 301.5 861.1 304.5 859.9C307.5 858.7 311.2 857.8 314.0 857.8C316.9 857.8 320.4 858.5 321.5 859.9C322.6 861.3 321.5 864.0 320.4 866.3C319.4 868.6 316.7 871.4 315.1 873.7C313.5 876.0 311.9 878.2 310.9 880.1C309.8 882.1 308.0 883.5 308.7 885.4C309.4 887.4 313.0 890.0 315.1 891.8C317.2 893.6 319.0 894.5 321.5 896.1C324.0 897.7 327.0 899.8 330.0 901.4C333.0 903.0 336.2 904.4 339.6 905.6C342.9 906.9 346.7 907.8 350.2 908.8C353.8 909.9 357.5 911.4 360.9 912.0C364.2 912.6 367.6 911.8 370.4 912.6C373.3 913.3 376.8 914.6 377.9 916.3C378.9 918.0 378.0 920.5 376.8 922.7C375.6 924.8 372.9 927.8 370.4 929.0C367.9 930.3 364.9 929.8 361.9 930.1C358.9 930.5 355.5 930.6 352.3 931.2C349.1 931.7 344.7 932.2 342.8 933.3C340.8 934.4 339.9 935.6 340.6 937.6C341.3 939.5 344.5 942.0 347.0 945.0C349.5 948.0 352.9 952.3 355.5 955.6C358.2 959.0 360.9 962.2 363.0 965.2C365.1 968.2 367.1 971.2 368.3 973.7C369.5 976.2 370.6 978.7 370.4 980.1C370.2 981.5 369.0 982.9 367.2 982.2C365.5 981.5 362.4 978.7 359.8 975.9C357.1 973.0 354.1 968.4 351.3 965.2C348.4 962.0 345.6 959.0 342.8 956.7C339.9 954.4 337.1 952.4 334.3 951.4C331.4 950.3 327.7 949.4 325.7 950.3C323.8 951.2 323.3 954.0 322.6 956.7C321.8 959.4 322.0 963.1 321.5 966.3C321.0 969.5 319.9 972.8 319.4 975.9C318.8 978.9 319.7 981.9 318.3 984.4C316.9 986.8 313.2 990.2 310.9 990.7C308.5 991.3 305.9 989.5 304.5 987.6C303.0 985.6 302.9 982.2 302.3 979.0C301.8 975.9 302.0 972.0 301.3 968.4C300.6 964.9 299.5 961.3 298.1 957.8C296.7 954.2 294.9 950.5 292.8 947.1C290.6 943.8 288.0 940.6 285.3 937.6C282.7 934.5 279.6 931.3 276.8 929.0C274.0 926.7 271.0 924.4 268.3 923.7C265.6 923.0 263.3 923.9 260.9 924.8C258.4 925.7 255.9 927.3 253.4 929.0C250.9 930.8 248.2 934.0 246.0 935.4C243.7 936.8 241.3 938.4 240.1 937.6C239.0 936.7 238.6 933.1 239.0 930.1C239.5 927.1 241.3 923.0 242.8 919.5C244.3 915.9 246.3 912.0 248.1 908.8C249.9 905.6 253.2 903.0 253.4 900.3C253.6 897.7 250.4 895.5 249.1 892.9C247.9 890.2 246.8 887.4 246.0 884.4C245.1 881.3 244.5 878.0 243.8 874.8C243.1 871.6 241.3 867.5 241.7 865.2Z"/></clipPath><clipPath id="tc"><path d="M559.5 884.4C561.4 886.7 561.8 892.2 561.6 895.0C561.4 897.8 561.1 899.8 558.4 901.4C555.8 903.0 550.4 903.5 545.7 904.6C540.9 905.6 535.0 907.1 529.7 907.8C524.4 908.5 518.5 908.5 513.7 908.8C509.0 909.2 505.2 909.0 501.0 909.9C496.7 910.8 492.1 912.4 488.2 914.1C484.3 915.9 480.9 918.0 477.6 920.5C474.2 923.0 470.8 926.0 468.0 929.0C465.2 932.1 462.1 935.6 460.6 938.6C459.0 941.6 458.2 945.0 458.4 947.1C458.6 949.3 460.6 951.4 461.6 951.4C462.7 951.4 463.2 948.5 464.8 947.1C466.4 945.7 468.7 943.8 471.2 942.9C473.7 941.9 476.9 941.1 479.7 941.3C482.5 941.5 485.6 942.4 488.2 943.9C490.9 945.4 493.7 947.8 495.7 950.3C497.6 952.8 499.2 955.8 499.9 958.8C500.6 961.8 500.6 965.4 499.9 968.4C499.2 971.4 497.8 974.4 495.7 976.9C493.5 979.4 490.5 981.7 487.1 983.3C483.8 984.9 479.5 986.1 475.4 986.5C471.4 986.8 466.8 986.3 462.7 985.4C458.6 984.5 454.5 983.3 451.0 981.2C447.4 979.0 444.2 976.0 441.4 972.7C438.6 969.3 435.7 965.0 434.0 961.0C432.2 956.9 431.2 952.4 430.8 948.2C430.3 943.9 430.6 939.5 431.3 935.4C432.0 931.3 433.3 927.4 435.0 923.7C436.7 920.0 438.7 916.6 441.4 913.1C444.1 909.5 447.4 905.8 451.0 902.4C454.5 899.1 458.6 895.7 462.7 892.9C466.8 890.0 471.2 887.5 475.4 885.4C479.7 883.4 483.6 881.7 488.2 880.6C492.8 879.6 498.0 879.3 503.1 879.0C508.2 878.8 514.1 879.0 519.1 879.0C524.0 879.1 529.2 879.8 532.9 879.6C536.6 879.4 538.6 877.7 541.4 878.0C544.2 878.2 546.9 880.1 549.9 881.2C552.9 882.2 557.5 882.1 559.5 884.4Z"/></clipPath>
</defs>
<path d="M93.2 873.7C93.9 872.0 96.4 869.9 99.6 868.4C102.8 866.9 107.7 865.6 112.3 864.7C117.0 863.8 122.3 863.4 127.2 863.1C132.2 862.8 137.7 862.6 142.1 863.1C146.6 863.5 151.3 864.3 153.8 865.7C156.3 867.2 156.3 869.0 157.0 871.6C157.7 874.2 157.2 878.0 158.1 881.2C159.0 884.4 161.4 887.9 162.3 890.7C163.3 893.6 164.1 895.5 163.9 898.2C163.8 900.9 161.9 903.9 161.3 906.7C160.7 909.5 161.1 912.7 160.2 915.2C159.3 917.7 156.5 919.5 156.0 921.6C155.4 923.7 155.8 926.0 157.0 928.0C158.3 929.9 161.1 931.5 163.4 933.3C165.7 935.1 168.0 937.0 170.9 938.6C173.7 940.2 178.0 941.5 180.4 942.9C182.8 944.3 184.7 945.2 185.2 947.1C185.7 949.1 184.9 952.4 183.6 954.6C182.3 956.7 179.9 958.7 177.2 959.9C174.6 961.1 170.5 961.8 167.7 962.0C164.8 962.2 162.7 962.4 160.2 961.0C157.7 959.5 155.1 956.3 152.8 953.5C150.5 950.7 148.3 947.3 146.4 943.9C144.4 940.6 142.8 936.7 141.1 933.3C139.3 929.9 137.5 926.6 135.7 923.7C134.0 920.9 132.2 918.8 130.4 916.3C128.7 913.8 126.9 911.8 125.1 908.8C123.3 905.8 121.2 901.4 119.8 898.2C118.4 895.0 117.8 892.3 116.6 889.7C115.4 887.0 114.5 884.0 112.3 882.2C110.2 880.5 106.7 879.6 103.8 879.0C101.0 878.5 97.1 879.9 95.3 879.0C93.5 878.2 92.5 875.5 93.2 873.7Z" fill="url(#bg1)" stroke="#4a3622" stroke-width="1.6" stroke-linejoin="round"/>
<g clip-path="url(#bc)"><path d="M133.6 919.5C134.0 921.2 139.3 927.6 142.1 932.2C145.0 936.8 147.8 942.9 150.6 947.1C153.5 951.4 156.3 955.6 159.1 957.8C162.0 959.9 167.7 961.0 167.7 959.9C167.7 958.8 162.3 955.3 159.1 951.4C156.0 947.5 151.7 941.5 148.5 936.5C145.3 931.5 142.5 924.4 140.0 921.6C137.5 918.8 133.3 917.7 133.6 919.5Z" fill="#8a6a38" opacity="0.6" filter="url(#ib)"/></g>
<path d="M95.3 879.0C97.6 878.5 101.0 878.5 103.8 879.0C106.7 879.6 110.2 880.5 112.3 882.2C114.5 884.0 115.4 887.0 116.6 889.7C117.8 892.3 118.4 895.0 119.8 898.2C121.2 901.4 123.3 905.8 125.1 908.8C126.9 911.8 129.0 914.1 130.4 916.3C131.8 918.4 133.4 919.8 133.6 921.6C133.8 923.4 133.6 925.7 131.5 926.9C129.4 928.2 124.4 928.2 120.9 929.0C117.3 929.9 113.6 930.8 110.2 932.2C106.8 933.7 103.3 935.4 100.6 937.6C98.0 939.7 95.7 942.3 94.3 945.0C92.8 947.7 92.1 950.7 92.1 953.5C92.1 956.3 93.0 959.2 94.3 962.0C95.5 964.9 98.0 968.0 99.6 970.5C101.2 973.0 103.8 975.2 103.8 976.9C103.8 978.6 101.7 980.1 99.6 980.6C97.4 981.2 94.1 981.1 91.1 980.1C88.0 979.1 84.5 977.3 81.5 974.8C78.5 972.3 75.5 968.8 73.0 965.2C70.5 961.7 68.2 957.6 66.6 953.5C65.0 949.4 63.8 945.0 63.4 940.7C63.0 936.5 63.2 932.2 63.9 928.0C64.6 923.7 66.0 919.5 67.7 915.2C69.3 911.0 71.6 906.5 74.0 902.4C76.5 898.4 79.9 894.1 82.6 890.7C85.2 887.4 87.9 884.2 90.0 882.2C92.1 880.3 93.0 879.6 95.3 879.0Z" fill="url(#cg)" stroke="#4a3622" stroke-width="1.6" stroke-linejoin="round"/>
<g clip-path="url(#kc)"><path d="M99.6 904.6C103.1 902.1 109.9 898.5 114.5 900.3C119.1 902.1 124.4 911.0 127.2 915.2C130.1 919.5 133.6 923.5 131.5 925.9C129.4 928.2 119.8 927.3 114.5 929.0C109.1 930.8 103.5 933.5 99.6 936.5C95.7 939.5 92.7 948.2 91.1 947.1C89.5 946.1 89.6 935.4 90.0 930.1C90.4 924.8 91.6 919.5 93.2 915.2C94.8 911.0 96.0 907.1 99.6 904.6Z" fill="#b39466" opacity="0.55" filter="url(#ib)"/><path d="M75.1 913.1C77.8 908.1 82.0 900.7 84.7 900.3C87.3 900.0 91.4 906.0 91.1 911.0C90.7 915.9 84.3 923.4 82.6 930.1C80.8 936.8 79.7 944.6 80.4 951.4C81.1 958.1 87.2 968.4 86.8 970.5C86.5 972.7 81.1 967.7 78.3 964.1C75.5 960.6 71.4 954.9 69.8 949.3C68.2 943.6 67.8 936.1 68.7 930.1C69.6 924.1 72.4 918.0 75.1 913.1Z" fill="#f6ead0" opacity="0.7" filter="url(#ib)"/></g>
<g filter="url(#ib1)"><path d="M241.7 865.2C242.1 862.9 243.8 861.7 246.0 861.0C248.1 860.2 251.3 860.4 254.5 861.0C257.7 861.5 261.7 863.1 265.1 864.1C268.5 865.2 271.7 866.1 274.7 867.3C277.7 868.6 280.7 871.1 283.2 871.6C285.7 872.1 287.4 871.6 289.6 870.5C291.7 869.5 293.5 867.0 296.0 865.2C298.4 863.4 301.5 861.1 304.5 859.9C307.5 858.7 311.2 857.8 314.0 857.8C316.9 857.8 320.4 858.5 321.5 859.9C322.6 861.3 321.5 864.0 320.4 866.3C319.4 868.6 316.7 871.4 315.1 873.7C313.5 876.0 311.9 878.2 310.9 880.1C309.8 882.1 308.0 883.5 308.7 885.4C309.4 887.4 313.0 890.0 315.1 891.8C317.2 893.6 319.0 894.5 321.5 896.1C324.0 897.7 327.0 899.8 330.0 901.4C333.0 903.0 336.2 904.4 339.6 905.6C342.9 906.9 346.7 907.8 350.2 908.8C353.8 909.9 357.5 911.4 360.9 912.0C364.2 912.6 367.6 911.8 370.4 912.6C373.3 913.3 376.8 914.6 377.9 916.3C378.9 918.0 378.0 920.5 376.8 922.7C375.6 924.8 372.9 927.8 370.4 929.0C367.9 930.3 364.9 929.8 361.9 930.1C358.9 930.5 355.5 930.6 352.3 931.2C349.1 931.7 344.7 932.2 342.8 933.3C340.8 934.4 339.9 935.6 340.6 937.6C341.3 939.5 344.5 942.0 347.0 945.0C349.5 948.0 352.9 952.3 355.5 955.6C358.2 959.0 360.9 962.2 363.0 965.2C365.1 968.2 367.1 971.2 368.3 973.7C369.5 976.2 370.6 978.7 370.4 980.1C370.2 981.5 369.0 982.9 367.2 982.2C365.5 981.5 362.4 978.7 359.8 975.9C357.1 973.0 354.1 968.4 351.3 965.2C348.4 962.0 345.6 959.0 342.8 956.7C339.9 954.4 337.1 952.4 334.3 951.4C331.4 950.3 327.7 949.4 325.7 950.3C323.8 951.2 323.3 954.0 322.6 956.7C321.8 959.4 322.0 963.1 321.5 966.3C321.0 969.5 319.9 972.8 319.4 975.9C318.8 978.9 319.7 981.9 318.3 984.4C316.9 986.8 313.2 990.2 310.9 990.7C308.5 991.3 305.9 989.5 304.5 987.6C303.0 985.6 302.9 982.2 302.3 979.0C301.8 975.9 302.0 972.0 301.3 968.4C300.6 964.9 299.5 961.3 298.1 957.8C296.7 954.2 294.9 950.5 292.8 947.1C290.6 943.8 288.0 940.6 285.3 937.6C282.7 934.5 279.6 931.3 276.8 929.0C274.0 926.7 271.0 924.4 268.3 923.7C265.6 923.0 263.3 923.9 260.9 924.8C258.4 925.7 255.9 927.3 253.4 929.0C250.9 930.8 248.2 934.0 246.0 935.4C243.7 936.8 241.3 938.4 240.1 937.6C239.0 936.7 238.6 933.1 239.0 930.1C239.5 927.1 241.3 923.0 242.8 919.5C244.3 915.9 246.3 912.0 248.1 908.8C249.9 905.6 253.2 903.0 253.4 900.3C253.6 897.7 250.4 895.5 249.1 892.9C247.9 890.2 246.8 887.4 246.0 884.4C245.1 881.3 244.5 878.0 243.8 874.8C243.1 871.6 241.3 867.5 241.7 865.2Z" fill="#1f1c1a" stroke="#1f1c1a" stroke-width="1"/></g>
<g clip-path="url(#pc)"><g filter="url(#ib)"><path d="M261.9 904.6C263.5 902.1 270.1 898.9 274.7 900.3C279.3 901.7 285.7 908.1 289.6 913.1C293.5 918.0 298.1 926.9 298.1 930.1C298.1 933.3 293.1 933.7 289.6 932.2C286.0 930.8 280.9 924.4 276.8 921.6C272.7 918.8 267.6 918.0 265.1 915.2C262.6 912.4 260.3 907.1 261.9 904.6Z" fill="#4a4643" opacity="0.8"/><path d="M310.9 893.9C313.0 893.2 319.7 901.2 325.7 904.6C331.8 907.9 339.9 912.0 347.0 914.1C354.1 916.3 365.1 915.4 368.3 917.3C371.5 919.3 370.1 924.4 366.2 925.9C362.3 927.3 351.6 926.9 344.9 925.9C338.2 924.8 331.1 922.3 325.7 919.5C320.4 916.6 315.5 913.1 313.0 908.8C310.5 904.6 308.7 894.6 310.9 893.9Z" fill="#3a3633" opacity="0.8"/><path d="M304.5 951.4C306.2 949.3 313.3 951.4 315.1 955.6C316.9 959.9 316.2 972.3 315.1 976.9C314.0 981.5 310.5 984.7 308.7 983.3C307.0 981.9 305.2 973.7 304.5 968.4C303.8 963.1 302.7 953.5 304.5 951.4Z" fill="#34302d" opacity="0.8"/><path d="M289.6 871.6C291.3 868.9 300.2 865.4 304.5 864.1C308.7 862.9 314.4 862.0 315.1 864.1C315.8 866.3 310.9 873.4 308.7 876.9C306.6 880.5 304.8 884.9 302.3 885.4C299.9 886.0 296.0 882.4 293.8 880.1C291.7 877.8 287.8 874.3 289.6 871.6Z" fill="#34302d" opacity="0.8"/></g></g>
<g clip-path="url(#pc)"><rect x="236" y="852" width="150" height="145" fill="#fff" filter="url(#nz)"/><path d="M253.4 871.6C256.6 874.6 265.8 883.1 272.6 889.7C279.3 896.2 286.7 904.2 293.8 911.0C300.9 917.7 308.7 924.4 315.1 930.1C321.5 935.8 329.3 942.5 332.1 945.0" stroke="#0c0a09" stroke-width="7" fill="none" opacity="0.75" filter="url(#ib)"/></g>
<g filter="url(#ib1)"><path d="M559.5 884.4C561.4 886.7 561.8 892.2 561.6 895.0C561.4 897.8 561.1 899.8 558.4 901.4C555.8 903.0 550.4 903.5 545.7 904.6C540.9 905.6 535.0 907.1 529.7 907.8C524.4 908.5 518.5 908.5 513.7 908.8C509.0 909.2 505.2 909.0 501.0 909.9C496.7 910.8 492.1 912.4 488.2 914.1C484.3 915.9 480.9 918.0 477.6 920.5C474.2 923.0 470.8 926.0 468.0 929.0C465.2 932.1 462.1 935.6 460.6 938.6C459.0 941.6 458.2 945.0 458.4 947.1C458.6 949.3 460.6 951.4 461.6 951.4C462.7 951.4 463.2 948.5 464.8 947.1C466.4 945.7 468.7 943.8 471.2 942.9C473.7 941.9 476.9 941.1 479.7 941.3C482.5 941.5 485.6 942.4 488.2 943.9C490.9 945.4 493.7 947.8 495.7 950.3C497.6 952.8 499.2 955.8 499.9 958.8C500.6 961.8 500.6 965.4 499.9 968.4C499.2 971.4 497.8 974.4 495.7 976.9C493.5 979.4 490.5 981.7 487.1 983.3C483.8 984.9 479.5 986.1 475.4 986.5C471.4 986.8 466.8 986.3 462.7 985.4C458.6 984.5 454.5 983.3 451.0 981.2C447.4 979.0 444.2 976.0 441.4 972.7C438.6 969.3 435.7 965.0 434.0 961.0C432.2 956.9 431.2 952.4 430.8 948.2C430.3 943.9 430.6 939.5 431.3 935.4C432.0 931.3 433.3 927.4 435.0 923.7C436.7 920.0 438.7 916.6 441.4 913.1C444.1 909.5 447.4 905.8 451.0 902.4C454.5 899.1 458.6 895.7 462.7 892.9C466.8 890.0 471.2 887.5 475.4 885.4C479.7 883.4 483.6 881.7 488.2 880.6C492.8 879.6 498.0 879.3 503.1 879.0C508.2 878.8 514.1 879.0 519.1 879.0C524.0 879.1 529.2 879.8 532.9 879.6C536.6 879.4 538.6 877.7 541.4 878.0C544.2 878.2 546.9 880.1 549.9 881.2C552.9 882.2 557.5 882.1 559.5 884.4Z" fill="#26221d" stroke="#1a1714" stroke-width="1"/></g>
<g clip-path="url(#tc)"><g filter="url(#ib)"><path d="M529.7 889.7C525.3 889.7 511.1 888.6 503.1 889.7C495.1 890.7 488.6 892.9 481.8 896.1C475.1 899.3 468.4 903.9 462.7 908.8C457.0 913.8 451.3 919.8 447.8 925.9C444.2 931.9 441.6 938.6 441.4 945.0C441.2 951.4 443.5 959.0 446.7 964.1C449.9 969.3 455.4 973.7 460.6 975.9C465.7 978.0 473.0 978.2 477.6 976.9C482.2 975.7 486.4 969.8 488.2 968.4" stroke="#36322a" stroke-width="7" fill="none" opacity="0.75"/></g><g filter="url(#ib1)"><ellipse cx="509.5" cy="890.7" rx="4" ry="2" fill="#161310" transform="rotate(10 509.5 890.7)"/><ellipse cx="486.1" cy="900.3" rx="4" ry="2.5" fill="#161310" transform="rotate(-30 486.1 900.3)"/><ellipse cx="469.1" cy="914.1" rx="3" ry="4" fill="#161310" transform="rotate(30 469.1 914.1)"/><ellipse cx="453.1" cy="930.1" rx="3" ry="4" fill="#161310" transform="rotate(20 453.1 930.1)"/><ellipse cx="444.6" cy="947.1" rx="3" ry="4" fill="#161310" transform="rotate(0 444.6 947.1)"/><ellipse cx="453.1" cy="967.3" rx="3" ry="4" fill="#161310" transform="rotate(-40 453.1 967.3)"/><ellipse cx="477.6" cy="955.6" rx="5" ry="4" fill="#191613" transform="rotate(0 477.6 955.6)"/></g></g>
<g clip-path="url(#tc)"><rect x="425" y="870" width="150" height="125" fill="#fff" filter="url(#nz2)" opacity="0.8"/></g>
<path d="M537.1 895.0C537.9 892.7 541.0 891.5 543.5 889.7C546.0 887.9 549.6 885.4 552.0 884.4C554.5 883.3 557.0 881.9 558.4 883.3C559.8 884.7 560.6 890.0 560.6 892.9C560.6 895.7 560.4 898.7 558.4 900.3C556.5 901.9 552.0 901.9 548.9 902.4C545.7 903.0 541.2 904.8 539.3 903.5C537.3 902.3 536.4 897.3 537.1 895.0Z" fill="#98503c" stroke="#3a1c14" stroke-width="1"/>
<path d="M461.6 952.4C462.3 952.3 462.9 954.2 464.8 955.6C466.8 957.1 472.1 959.7 473.3 961.0C474.6 962.2 473.7 963.1 472.3 963.1C470.8 963.1 466.8 962.0 464.8 961.0C462.9 959.9 461.1 958.1 460.6 956.7C460.0 955.3 460.9 952.6 461.6 952.4Z" fill="#b4b4b4"/>
</svg>
<!--/ITEMS-->
<div class="abs hline" style="left:9px;top:1101px;width:1703px"></div>

<div class="abs card" style="left:223px;top:1130px;width:170px;height:238px"><div class="lbl" style="top:160.3px">Broken Antler<br>Decor</div></div>
<div class="abs card" style="left:415px;top:1130px;width:170px;height:238px"><div class="lbl" style="top:160.3px">Deer Ear<br>Accessory</div></div>
<div class="abs card" style="left:607px;top:1130px;width:170px;height:238px"><div class="lbl" style="top:160.3px">Elk Ear<br>Accessory</div></div>
<div class="abs card" style="left:799px;top:1130px;width:170px;height:238px"><div class="lbl" style="top:160.3px">Moose Ear<br>Accessory</div></div>
<div class="abs card" style="left:991px;top:1130px;width:170px;height:238px"><div class="lbl" style="top:160.3px">Den of Pelts</div></div>

<!--SCROLL-->
<svg class="abs" style="left:36px;top:1172px" width="160" height="156" viewBox="36 1172 160 156">
<defs>
<filter id="sg" x="-30%" y="-30%" width="160%" height="160%"><feGaussianBlur stdDeviation="24"/></filter>
<filter id="sb" x="-10%" y="-10%" width="120%" height="120%"><feGaussianBlur stdDeviation="22"/></filter>
<filter id="sb1" x="-10%" y="-10%" width="120%" height="120%"><feGaussianBlur stdDeviation="4"/></filter>
<radialGradient id="pg" cx="0.52" cy="0.5" r="0.6"><stop offset="0" stop-color="#f4ead2"/><stop offset="0.6" stop-color="#e2d2ae"/><stop offset="1" stop-color="#b89a66"/></radialGradient>
<clipPath id="pclip"><path d="M300.0 215.0C328.3 213.3 363.3 205.8 400.0 200.0C436.7 194.2 480.0 188.3 520.0 180.0C560.0 171.7 600.0 160.0 640.0 150.0C680.0 140.0 725.0 128.3 760.0 120.0C795.0 111.7 821.7 98.3 850.0 100.0C878.3 101.7 908.3 113.3 930.0 130.0C951.7 146.7 965.0 171.7 980.0 200.0C995.0 228.3 1008.3 263.3 1020.0 300.0C1031.7 336.7 1036.7 380.0 1050.0 420.0C1063.3 460.0 1081.7 500.0 1100.0 540.0C1118.3 580.0 1138.3 621.7 1160.0 660.0C1181.7 698.3 1208.3 735.0 1230.0 770.0C1251.7 805.0 1278.3 838.3 1290.0 870.0C1301.7 901.7 1305.0 933.3 1300.0 960.0C1295.0 986.7 1283.3 1010.0 1260.0 1030.0C1236.7 1050.0 1196.7 1063.3 1160.0 1080.0C1123.3 1096.7 1080.0 1111.7 1040.0 1130.0C1000.0 1148.3 960.0 1168.3 920.0 1190.0C880.0 1211.7 836.7 1243.3 800.0 1260.0C763.3 1276.7 730.0 1288.3 700.0 1290.0C670.0 1291.7 643.3 1278.3 620.0 1270.0C596.7 1261.7 575.0 1255.0 560.0 1240.0C545.0 1225.0 531.7 1198.3 530.0 1180.0C528.3 1161.7 538.3 1141.7 550.0 1130.0C561.7 1118.3 598.3 1125.0 600.0 1110.0C601.7 1095.0 576.7 1066.7 560.0 1040.0C543.3 1013.3 521.7 981.7 500.0 950.0C478.3 918.3 451.7 881.7 430.0 850.0C408.3 818.3 386.7 786.7 370.0 760.0C353.3 733.3 340.0 716.7 330.0 690.0C320.0 663.3 308.3 631.7 310.0 600.0C311.7 568.3 336.7 530.0 340.0 500.0C343.3 470.0 336.7 428.3 330.0 420.0C323.3 411.7 316.7 445.0 300.0 450.0C283.3 455.0 253.3 455.0 230.0 450.0C206.7 445.0 177.5 431.7 160.0 420.0C142.5 408.3 131.7 395.0 125.0 380.0C118.3 365.0 115.8 351.7 120.0 330.0C124.2 308.3 131.7 270.0 150.0 250.0C168.3 230.0 205.0 215.8 230.0 210.0C255.0 204.2 271.7 216.7 300.0 215.0Z"/></clipPath>
</defs>
<g transform="translate(40,1175) scale(0.10638)">
<path d="M300.0 215.0C328.3 213.3 363.3 205.8 400.0 200.0C436.7 194.2 480.0 188.3 520.0 180.0C560.0 171.7 600.0 160.0 640.0 150.0C680.0 140.0 725.0 128.3 760.0 120.0C795.0 111.7 821.7 98.3 850.0 100.0C878.3 101.7 908.3 113.3 930.0 130.0C951.7 146.7 965.0 171.7 980.0 200.0C995.0 228.3 1008.3 263.3 1020.0 300.0C1031.7 336.7 1036.7 380.0 1050.0 420.0C1063.3 460.0 1081.7 500.0 1100.0 540.0C1118.3 580.0 1138.3 621.7 1160.0 660.0C1181.7 698.3 1208.3 735.0 1230.0 770.0C1251.7 805.0 1278.3 838.3 1290.0 870.0C1301.7 901.7 1305.0 933.3 1300.0 960.0C1295.0 986.7 1283.3 1010.0 1260.0 1030.0C1236.7 1050.0 1196.7 1063.3 1160.0 1080.0C1123.3 1096.7 1080.0 1111.7 1040.0 1130.0C1000.0 1148.3 960.0 1168.3 920.0 1190.0C880.0 1211.7 836.7 1243.3 800.0 1260.0C763.3 1276.7 730.0 1288.3 700.0 1290.0C670.0 1291.7 643.3 1278.3 620.0 1270.0C596.7 1261.7 575.0 1255.0 560.0 1240.0C545.0 1225.0 531.7 1198.3 530.0 1180.0C528.3 1161.7 538.3 1141.7 550.0 1130.0C561.7 1118.3 598.3 1125.0 600.0 1110.0C601.7 1095.0 576.7 1066.7 560.0 1040.0C543.3 1013.3 521.7 981.7 500.0 950.0C478.3 918.3 451.7 881.7 430.0 850.0C408.3 818.3 386.7 786.7 370.0 760.0C353.3 733.3 340.0 716.7 330.0 690.0C320.0 663.3 308.3 631.7 310.0 600.0C311.7 568.3 336.7 530.0 340.0 500.0C343.3 470.0 336.7 428.3 330.0 420.0C323.3 411.7 316.7 445.0 300.0 450.0C283.3 455.0 253.3 455.0 230.0 450.0C206.7 445.0 177.5 431.7 160.0 420.0C142.5 408.3 131.7 395.0 125.0 380.0C118.3 365.0 115.8 351.7 120.0 330.0C124.2 308.3 131.7 270.0 150.0 250.0C168.3 230.0 205.0 215.8 230.0 210.0C255.0 204.2 271.7 216.7 300.0 215.0Z" fill="#ec84cc" stroke="#ec84cc" stroke-width="46" stroke-linejoin="round" filter="url(#sg)" opacity="0.9"/>
<path d="M300.0 215.0C328.3 213.3 363.3 205.8 400.0 200.0C436.7 194.2 480.0 188.3 520.0 180.0C560.0 171.7 600.0 160.0 640.0 150.0C680.0 140.0 725.0 128.3 760.0 120.0C795.0 111.7 821.7 98.3 850.0 100.0C878.3 101.7 908.3 113.3 930.0 130.0C951.7 146.7 965.0 171.7 980.0 200.0C995.0 228.3 1008.3 263.3 1020.0 300.0C1031.7 336.7 1036.7 380.0 1050.0 420.0C1063.3 460.0 1081.7 500.0 1100.0 540.0C1118.3 580.0 1138.3 621.7 1160.0 660.0C1181.7 698.3 1208.3 735.0 1230.0 770.0C1251.7 805.0 1278.3 838.3 1290.0 870.0C1301.7 901.7 1305.0 933.3 1300.0 960.0C1295.0 986.7 1283.3 1010.0 1260.0 1030.0C1236.7 1050.0 1196.7 1063.3 1160.0 1080.0C1123.3 1096.7 1080.0 1111.7 1040.0 1130.0C1000.0 1148.3 960.0 1168.3 920.0 1190.0C880.0 1211.7 836.7 1243.3 800.0 1260.0C763.3 1276.7 730.0 1288.3 700.0 1290.0C670.0 1291.7 643.3 1278.3 620.0 1270.0C596.7 1261.7 575.0 1255.0 560.0 1240.0C545.0 1225.0 531.7 1198.3 530.0 1180.0C528.3 1161.7 538.3 1141.7 550.0 1130.0C561.7 1118.3 598.3 1125.0 600.0 1110.0C601.7 1095.0 576.7 1066.7 560.0 1040.0C543.3 1013.3 521.7 981.7 500.0 950.0C478.3 918.3 451.7 881.7 430.0 850.0C408.3 818.3 386.7 786.7 370.0 760.0C353.3 733.3 340.0 716.7 330.0 690.0C320.0 663.3 308.3 631.7 310.0 600.0C311.7 568.3 336.7 530.0 340.0 500.0C343.3 470.0 336.7 428.3 330.0 420.0C323.3 411.7 316.7 445.0 300.0 450.0C283.3 455.0 253.3 455.0 230.0 450.0C206.7 445.0 177.5 431.7 160.0 420.0C142.5 408.3 131.7 395.0 125.0 380.0C118.3 365.0 115.8 351.7 120.0 330.0C124.2 308.3 131.7 270.0 150.0 250.0C168.3 230.0 205.0 215.8 230.0 210.0C255.0 204.2 271.7 216.7 300.0 215.0Z" fill="url(#pg)" stroke="#4a3424" stroke-width="18" stroke-linejoin="round"/>
<g clip-path="url(#pclip)"><g filter="url(#sb)">
<path d="M300.0 215.0C331.7 213.3 403.3 180.8 420.0 200.0C436.7 219.2 413.3 280.0 400.0 330.0C386.7 380.0 355.0 455.0 340.0 500.0C325.0 545.0 323.3 606.7 310.0 600.0C296.7 593.3 278.3 486.7 260.0 460.0C241.7 433.3 221.7 453.3 200.0 440.0C178.3 426.7 138.3 411.7 130.0 380.0C121.7 348.3 133.3 278.3 150.0 250.0C166.7 221.7 205.0 215.8 230.0 210.0C255.0 204.2 268.3 216.7 300.0 215.0Z" fill="#6a4e30" opacity="0.85"/>
<path d="M1100.0 900.0C1166.7 863.3 1266.7 843.3 1300.0 860.0C1333.3 876.7 1323.3 961.7 1300.0 1000.0C1276.7 1038.3 1226.7 1056.7 1160.0 1090.0C1093.3 1123.3 976.7 1166.7 900.0 1200.0C823.3 1233.3 756.7 1283.3 700.0 1290.0C643.3 1296.7 570.0 1258.3 560.0 1240.0C550.0 1221.7 583.3 1206.7 640.0 1180.0C696.7 1153.3 823.3 1126.7 900.0 1080.0C976.7 1033.3 1033.3 936.7 1100.0 900.0Z" fill="#a8854e" opacity="0.8"/>
<path d="M840.0 100.0C853.3 95.0 913.3 103.3 940.0 130.0C966.7 156.7 1000.0 245.0 1000.0 260.0C1000.0 275.0 963.3 236.7 940.0 220.0C916.7 203.3 876.7 180.0 860.0 160.0C843.3 140.0 826.7 105.0 840.0 100.0Z" fill="#a8854e" opacity="0.8"/>
</g></g>
<circle cx="205" cy="360" r="42" fill="#ee8ccc"/>
<path d="M290.0 300.0C289.2 313.3 293.3 358.3 285.0 380.0C276.7 401.7 247.5 421.7 240.0 430.0" stroke="#8a6a3a" stroke-width="22" fill="none"/>
<path d="M560.0 1180.0C566.7 1175.0 586.7 1150.0 600.0 1150.0C613.3 1150.0 636.7 1166.7 640.0 1180.0C643.3 1193.3 623.3 1221.7 620.0 1230.0" stroke="#5a4028" stroke-width="16" fill="none"/>
<g filter="url(#sb1)"><path d="M635 478A100 100 0 1 1 551 471" fill="none" stroke="#d81b60" stroke-width="34" stroke-linecap="round"/><path d="M631 429A100 100 0 1 1 691 489" fill="none" stroke="#d81b60" stroke-width="34" stroke-linecap="round"/><path d="M413 625A170 170 0 0 1 421 442" fill="none" stroke="#d81b60" stroke-width="22" stroke-linecap="round"/><path d="M874 266A190 190 0 0 1 924 449" fill="none" stroke="#d81b60" stroke-width="24" stroke-linecap="round"/><path d="M815 270A150 150 0 0 1 876 337" fill="none" stroke="#d81b60" stroke-width="20" stroke-linecap="round"/><line x1="795" y1="540" x2="905" y2="900" stroke="#d81b60" stroke-width="22" stroke-linecap="round"/><line x1="855" y1="520" x2="960" y2="850" stroke="#d81b60" stroke-width="22" stroke-linecap="round"/><line x1="900" y1="500" x2="935" y2="640" stroke="#d81b60" stroke-width="22" stroke-linecap="round"/><line x1="740" y1="650" x2="860" y2="920" stroke="#d81b60" stroke-width="22" stroke-linecap="round"/><line x1="690" y1="710" x2="770" y2="880" stroke="#d81b60" stroke-width="22" stroke-linecap="round"/><line x1="700" y1="780" x2="740" y2="860" stroke="#d81b60" stroke-width="22" stroke-linecap="round"/><circle cx="635" cy="865" r="34" fill="#d81b60"/><circle cx="755" cy="890" r="34" fill="#d81b60"/><circle cx="730" cy="985" r="34" fill="#d81b60"/><circle cx="885" cy="1010" r="34" fill="#d81b60"/><circle cx="1010" cy="960" r="34" fill="#d81b60"/><circle cx="940" cy="805" r="34" fill="#d81b60"/><circle cx="1060" cy="810" r="34" fill="#d81b60"/><circle cx="1025" cy="685" r="34" fill="#d81b60"/></g>
</g>
</svg>
<!--/SCROLL-->
<!--THUMBS-->
<svg class="abs" style="left:223px;top:1130px" width="940" height="170" viewBox="223 1130 940 170"><defs>
<filter id="tb" x="-10%" y="-10%" width="120%" height="120%"><feGaussianBlur stdDeviation="5"/></filter>
<filter id="tb3" x="-30%" y="-30%" width="160%" height="160%"><feGaussianBlur stdDeviation="9"/></filter>
<filter id="tb2" x="-10%" y="-10%" width="120%" height="120%"><feGaussianBlur stdDeviation="14"/></filter>
<clipPath id="tclip"><rect x="140" y="135" width="1145" height="1140"/></clipPath>
<linearGradient id="furg" x1="0" y1="0" x2="0.15" y2="1"><stop offset="0" stop-color="#463c34"/><stop offset="0.13" stop-color="#6a5f55"/><stop offset="0.3" stop-color="#a0968a"/><stop offset="0.5" stop-color="#c6beb0"/><stop offset="0.75" stop-color="#dcd6c8"/><stop offset="1" stop-color="#e6e0d2"/></linearGradient>
</defs>
<g transform="translate(228,1136) scale(0.11348)"><g clip-path="url(#tclip)"><rect x="140" y="135" width="1145" height="1140" fill="#c9a468"/><g filter="url(#tb2)"><path d="M140.0 135.0L1285.0 135.0L1285.0 720.0L900.0 660.0L600.0 520.0L350.0 420.0L140.0 480.0Z" fill="#b1864e" /><path d="M140.0 135.0C203.3 79.2 473.3 107.5 520.0 135.0C566.7 162.5 451.7 252.5 420.0 300.0C388.3 347.5 376.7 391.7 330.0 420.0C283.3 448.3 171.7 517.5 140.0 470.0C108.3 422.5 76.7 190.8 140.0 135.0Z" fill="#dcbc8c" /><path d="M600.0 200.0C656.7 175.0 833.3 146.7 900.0 180.0C966.7 213.3 1000.0 330.0 1000.0 400.0C1000.0 470.0 950.0 586.7 900.0 600.0C850.0 613.3 756.7 525.0 700.0 480.0C643.3 435.0 576.7 376.7 560.0 330.0C543.3 283.3 543.3 225.0 600.0 200.0Z" fill="#a87c44" /><path d="M140.0 720.0L420.0 720.0L700.0 780.0L860.0 1000.0L960.0 1275.0L140.0 1275.0Z" fill="#d9b877" /><path d="M1040.0 135.0L1285.0 135.0L1285.0 1275.0L1235.0 1275.0L1210.0 900.0L1150.0 600.0L990.0 440.0Z" fill="#6a3a20" /><path d="M1000.0 640.0C1011.7 596.7 1096.7 533.3 1130.0 560.0C1163.3 586.7 1182.5 710.0 1200.0 800.0C1217.5 890.0 1228.3 1026.7 1235.0 1100.0C1241.7 1173.3 1252.5 1253.3 1240.0 1240.0C1227.5 1226.7 1190.0 1090.0 1160.0 1020.0C1130.0 950.0 1086.7 883.3 1060.0 820.0C1033.3 756.7 988.3 683.3 1000.0 640.0Z" fill="#dcae80" /><path d="M140.0 460.0C166.7 411.7 273.3 406.7 300.0 430.0C326.7 453.3 313.3 561.7 300.0 600.0C286.7 638.3 246.7 640.0 220.0 660.0C193.3 680.0 153.3 753.3 140.0 720.0C126.7 686.7 113.3 508.3 140.0 460.0Z" fill="#7d8378" /><path d="M320.0 600.0C345.0 590.0 426.7 620.0 480.0 640.0C533.3 660.0 616.7 693.3 640.0 720.0C663.3 746.7 650.0 796.7 620.0 800.0C590.0 803.3 508.3 756.7 460.0 740.0C411.7 723.3 353.3 723.3 330.0 700.0C306.7 676.7 295.0 610.0 320.0 600.0Z" fill="#3a2a1a" /></g><g filter="url(#tb)"><path d="M830.0 850.0C835.0 821.7 871.7 821.7 900.0 830.0C928.3 838.3 963.3 865.0 1000.0 900.0C1036.7 935.0 1083.3 993.3 1120.0 1040.0C1156.7 1086.7 1200.0 1140.8 1220.0 1180.0C1240.0 1219.2 1276.7 1259.2 1240.0 1275.0C1203.3 1290.8 1051.7 1300.8 1000.0 1275.0C948.3 1249.2 951.7 1165.8 930.0 1120.0C908.3 1074.2 886.7 1045.0 870.0 1000.0C853.3 955.0 825.0 878.3 830.0 850.0Z" fill="#c8a060" stroke="#3a2818" stroke-width="22"/><path d="M300.0 500.0C315.0 481.7 358.3 470.0 400.0 470.0C441.7 470.0 496.7 483.3 550.0 500.0C603.3 516.7 658.3 538.3 720.0 570.0C781.7 601.7 861.7 645.0 920.0 690.0C978.3 735.0 1028.3 790.0 1070.0 840.0C1111.7 890.0 1143.3 940.0 1170.0 990.0C1196.7 1040.0 1225.0 1111.7 1230.0 1140.0C1235.0 1168.3 1218.3 1180.0 1200.0 1160.0C1181.7 1140.0 1153.3 1066.7 1120.0 1020.0C1086.7 973.3 1045.0 923.3 1000.0 880.0C955.0 836.7 900.0 793.3 850.0 760.0C800.0 726.7 748.3 703.3 700.0 680.0C651.7 656.7 610.0 635.0 560.0 620.0C510.0 605.0 441.7 596.7 400.0 590.0C358.3 583.3 326.7 595.0 310.0 580.0C293.3 565.0 285.0 518.3 300.0 500.0Z" fill="#87594a" stroke="#3a2218" stroke-width="16"/><path d="M340.0 520.0C370.0 521.7 456.7 515.0 520.0 530.0C583.3 545.0 653.3 575.0 720.0 610.0C786.7 645.0 860.0 691.7 920.0 740.0C980.0 788.3 1036.7 846.7 1080.0 900.0C1123.3 953.3 1163.3 1033.3 1180.0 1060.0" fill="none" stroke="#b48a72" stroke-width="18" stroke-linecap="round" /><path d="M560.0 610.0C580.0 611.7 630.0 648.3 660.0 680.0C690.0 711.7 718.3 755.0 740.0 800.0C761.7 845.0 778.0 898.3 790.0 950.0C802.0 1001.7 813.7 1081.7 812.0 1110.0C810.3 1138.3 790.3 1141.7 780.0 1120.0C769.7 1098.3 763.3 1025.0 750.0 980.0C736.7 935.0 721.7 890.0 700.0 850.0C678.3 810.0 646.7 770.0 620.0 740.0C593.3 710.0 550.0 691.7 540.0 670.0C530.0 648.3 540.0 608.3 560.0 610.0Z" fill="#87594a" stroke="#3a2218" stroke-width="14"/><path d="M600.0 670.0C616.7 691.7 673.3 751.7 700.0 800.0C726.7 848.3 745.0 913.3 760.0 960.0C775.0 1006.7 785.0 1060.0 790.0 1080.0" fill="none" stroke="#b08468" stroke-width="12" stroke-linecap="round" /></g></g><line x1="85" y1="120" x2="1325" y2="120" stroke="#452a21" stroke-width="56" stroke-linecap="round"/><line x1="85" y1="1288" x2="1325" y2="1288" stroke="#452a21" stroke-width="56" stroke-linecap="round"/><line x1="122" y1="85" x2="122" y2="1325" stroke="#452a21" stroke-width="56" stroke-linecap="round"/><line x1="1302" y1="85" x2="1302" y2="1325" stroke="#452a21" stroke-width="56" stroke-linecap="round"/><line x1="85" y1="120" x2="1325" y2="120" stroke="#e3cfc6" stroke-width="30" stroke-linecap="round" stroke-dasharray="150 22"/><line x1="85" y1="1288" x2="1325" y2="1288" stroke="#e3cfc6" stroke-width="30" stroke-linecap="round" stroke-dasharray="150 22"/><line x1="122" y1="85" x2="122" y2="1325" stroke="#e3cfc6" stroke-width="30" stroke-linecap="round" stroke-dasharray="150 22"/><line x1="1302" y1="85" x2="1302" y2="1325" stroke="#e3cfc6" stroke-width="30" stroke-linecap="round" stroke-dasharray="150 22"/><g transform="translate(125,122) scale(1,1)"><path d="M-50 -45L35 30M-35 35L35 -30" stroke="#3a1c14" stroke-width="34" stroke-linecap="round"/><path d="M-50 -45L35 30M-35 35L35 -30" stroke="#a85a3a" stroke-width="16" stroke-linecap="round"/><path d="M-62 -62L-40 -40" stroke="#ead9d2" stroke-width="14" stroke-linecap="round"/></g><g transform="translate(1300,122) scale(-1,1)"><path d="M-50 -45L35 30M-35 35L35 -30" stroke="#3a1c14" stroke-width="34" stroke-linecap="round"/><path d="M-50 -45L35 30M-35 35L35 -30" stroke="#a85a3a" stroke-width="16" stroke-linecap="round"/><path d="M-62 -62L-40 -40" stroke="#ead9d2" stroke-width="14" stroke-linecap="round"/></g><g transform="translate(125,1288) scale(1,-1)"><path d="M-50 -45L35 30M-35 35L35 -30" stroke="#3a1c14" stroke-width="34" stroke-linecap="round"/><path d="M-50 -45L35 30M-35 35L35 -30" stroke="#a85a3a" stroke-width="16" stroke-linecap="round"/><path d="M-62 -62L-40 -40" stroke="#ead9d2" stroke-width="14" stroke-linecap="round"/></g><g transform="translate(1300,1288) scale(-1,-1)"><path d="M-50 -45L35 30M-35 35L35 -30" stroke="#3a1c14" stroke-width="34" stroke-linecap="round"/><path d="M-50 -45L35 30M-35 35L35 -30" stroke="#a85a3a" stroke-width="16" stroke-linecap="round"/><path d="M-62 -62L-40 -40" stroke="#ead9d2" stroke-width="14" stroke-linecap="round"/></g><circle cx="600" cy="95" r="14" fill="#4a2c22"/><circle cx="950" cy="1315" r="14" fill="#4a2c22"/><circle cx="440" cy="1315" r="14" fill="#4a2c22"/><circle cx="95" cy="690" r="14" fill="#4a2c22"/><circle cx="1330" cy="830" r="14" fill="#4a2c22"/><circle cx="1330" cy="280" r="14" fill="#4a2c22"/></g>
<g transform="translate(420,1136) scale(0.11348)"><g clip-path="url(#tclip)"><rect x="140" y="135" width="1145" height="1140" fill="#70685e"/><g filter="url(#tb2)"><path d="M400.0 135.0L1285.0 135.0L1285.0 800.0L1100.0 600.0L800.0 400.0L500.0 280.0Z" fill="#6c6256" /><path d="M400.0 135.0L1285.0 135.0L1285.0 260.0L500.0 220.0Z" fill="#4c463e" /><path d="M1000.0 300.0C1040.8 270.0 1237.5 223.3 1285.0 300.0C1332.5 376.7 1307.5 703.3 1285.0 760.0C1262.5 816.7 1190.8 686.7 1150.0 640.0C1109.2 593.3 1065.0 536.7 1040.0 480.0C1015.0 423.3 959.2 330.0 1000.0 300.0Z" fill="#8c7e68" /><ellipse cx="260" cy="230" rx="120" ry="95" fill="#d8ccb0" transform="rotate(0 260 230)" /><ellipse cx="165" cy="380" rx="60" ry="85" fill="#161616" transform="rotate(0 165 380)" /><path d="M230.0 330.0C253.3 271.7 288.3 203.3 330.0 190.0C371.7 176.7 465.0 211.7 480.0 250.0C495.0 288.3 445.0 370.0 420.0 420.0C395.0 470.0 368.3 530.0 330.0 550.0C291.7 570.0 206.7 576.7 190.0 540.0C173.3 503.3 206.7 388.3 230.0 330.0Z" fill="#72726f" /><path d="M300.0 260.0C298.3 283.3 298.3 356.7 290.0 400.0C281.7 443.3 256.7 500.0 250.0 520.0" fill="none" stroke="#a8a8a4" stroke-width="40" stroke-linecap="round" /><path d="M140.0 640.0C165.0 595.0 260.0 593.3 290.0 620.0C320.0 646.7 321.7 753.3 320.0 800.0C318.3 846.7 310.0 885.0 280.0 900.0C250.0 915.0 163.3 933.3 140.0 890.0C116.7 846.7 115.0 685.0 140.0 640.0Z" fill="#8f97ae" /><path d="M140.0 900.0L330.0 870.0L520.0 1000.0L800.0 1150.0L1100.0 1275.0L140.0 1275.0Z" fill="#c09468" /><path d="M900.0 900.0C910.0 876.7 966.7 923.3 1000.0 960.0C1033.3 996.7 1065.0 1067.5 1100.0 1120.0C1135.0 1172.5 1226.7 1249.2 1210.0 1275.0C1193.3 1300.8 1045.0 1304.2 1000.0 1275.0C955.0 1245.8 956.7 1162.5 940.0 1100.0C923.3 1037.5 890.0 923.3 900.0 900.0Z" fill="#c8a080" /><path d="M830.0 800.0C838.3 783.3 909.2 785.0 930.0 800.0C950.8 815.0 963.3 873.3 955.0 890.0C946.7 906.7 900.8 915.0 880.0 900.0C859.2 885.0 821.7 816.7 830.0 800.0Z" fill="#959cb2" /><path d="M1000.0 800.0C1047.5 770.0 1237.5 690.8 1285.0 770.0C1332.5 849.2 1297.5 1190.8 1285.0 1275.0C1272.5 1359.2 1240.8 1304.2 1210.0 1275.0C1179.2 1245.8 1135.0 1154.2 1100.0 1100.0C1065.0 1045.8 1016.7 1000.0 1000.0 950.0C983.3 900.0 952.5 830.0 1000.0 800.0Z" fill="#7c766c" /><path d="M200.0 1000.0C236.7 1020.0 336.7 1086.7 420.0 1120.0C503.3 1153.3 653.3 1186.7 700.0 1200.0" fill="none" stroke="#a87850" stroke-width="30" stroke-linecap="round" /><circle cx="360" cy="1085" r="24" fill="#d0609a" opacity="0.85"/><circle cx="300" cy="1200" r="26" fill="#d0609a" opacity="0.85"/></g><g filter="url(#tb)"><path d="M400.0 420.0C418.3 426.7 436.7 516.7 470.0 560.0C503.3 603.3 551.7 640.0 600.0 680.0C648.3 720.0 718.3 763.3 760.0 800.0C801.7 836.7 823.3 863.3 850.0 900.0C876.7 936.7 897.5 968.3 920.0 1020.0C942.5 1071.7 988.3 1183.3 985.0 1210.0C981.7 1236.7 937.5 1201.7 900.0 1180.0C862.5 1158.3 810.0 1113.3 760.0 1080.0C710.0 1046.7 648.3 1010.0 600.0 980.0C551.7 950.0 506.7 930.0 470.0 900.0C433.3 870.0 401.7 836.7 380.0 800.0C358.3 763.3 343.3 726.7 340.0 680.0C336.7 633.3 350.0 563.3 360.0 520.0C370.0 476.7 381.7 413.3 400.0 420.0Z" fill="#8c8070" stroke="#221c18" stroke-width="22"/><path d="M350.0 700.0C360.0 690.0 391.7 730.0 420.0 760.0C448.3 790.0 483.3 846.7 520.0 880.0C556.7 913.3 633.3 940.0 640.0 960.0C646.7 980.0 593.3 1006.7 560.0 1000.0C526.7 993.3 473.3 950.0 440.0 920.0C406.7 890.0 375.0 856.7 360.0 820.0C345.0 783.3 340.0 710.0 350.0 700.0Z" fill="#ece0e0" /><path d="M420.0 560.0C443.3 593.3 503.3 696.7 560.0 760.0C616.7 823.3 703.3 883.3 760.0 940.0C816.7 996.7 876.7 1073.3 900.0 1100.0" fill="none" stroke="#5a5048" stroke-width="18" stroke-linecap="round" /><path d="M500.0 280.0C528.3 265.0 590.0 310.0 640.0 330.0C690.0 350.0 746.7 375.0 800.0 400.0C853.3 425.0 910.0 450.0 960.0 480.0C1010.0 510.0 1054.2 539.2 1100.0 580.0C1145.8 620.8 1235.0 692.5 1235.0 725.0C1235.0 757.5 1147.5 763.3 1100.0 775.0C1052.5 786.7 996.7 793.3 950.0 795.0C903.3 796.7 865.0 795.0 820.0 785.0C775.0 775.0 720.0 755.8 680.0 735.0C640.0 714.2 606.7 689.2 580.0 660.0C553.3 630.8 538.3 600.0 520.0 560.0C501.7 520.0 473.3 466.7 470.0 420.0C466.7 373.3 471.7 295.0 500.0 280.0Z" fill="#6a6058" stroke="#1e1814" stroke-width="20"/><path d="M520.0 330.0C550.0 341.7 636.7 373.3 700.0 400.0C763.3 426.7 836.7 456.7 900.0 490.0C963.3 523.3 1030.0 563.3 1080.0 600.0C1130.0 636.7 1180.0 691.7 1200.0 710.0" fill="none" stroke="#3a322c" stroke-width="26" stroke-linecap="round" /><path d="M540.0 430.0C566.7 416.7 643.3 438.3 700.0 450.0C756.7 461.7 821.7 475.0 880.0 500.0C938.3 525.0 1000.0 566.7 1050.0 600.0C1100.0 633.3 1188.3 675.8 1180.0 700.0C1171.7 724.2 1058.3 737.5 1000.0 745.0C941.7 752.5 883.3 753.3 830.0 745.0C776.7 736.7 720.0 715.8 680.0 695.0C640.0 674.2 613.3 647.5 590.0 620.0C566.7 592.5 548.3 561.7 540.0 530.0C531.7 498.3 513.3 443.3 540.0 430.0Z" fill="#dcc4c4" /><path d="M600.0 470.0C623.3 481.7 690.0 515.0 740.0 540.0C790.0 565.0 873.3 606.7 900.0 620.0" fill="none" stroke="#7a6864" stroke-width="40" stroke-linecap="round" /><path d="M580.0 560.0C600.0 573.3 653.3 616.7 700.0 640.0C746.7 663.3 833.3 690.0 860.0 700.0" fill="none" stroke="#f6f0f0" stroke-width="30" stroke-linecap="round" /><path d="M700.0 470.0C726.7 476.7 816.7 495.0 860.0 510.0C903.3 525.0 943.3 551.7 960.0 560.0" fill="none" stroke="#f4eeee" stroke-width="22" stroke-linecap="round" /></g></g><line x1="85" y1="120" x2="1325" y2="120" stroke="#452a21" stroke-width="56" stroke-linecap="round"/><line x1="85" y1="1288" x2="1325" y2="1288" stroke="#452a21" stroke-width="56" stroke-linecap="round"/><line x1="122" y1="85" x2="122" y2="1325" stroke="#452a21" stroke-width="56" stroke-linecap="round"/><line x1="1302" y1="85" x2="1302" y2="1325" stroke="#452a21" stroke-width="56" stroke-linecap="round"/><line x1="85" y1="120" x2="1325" y2="120" stroke="#e3cfc6" stroke-width="30" stroke-linecap="round" stroke-dasharray="150 22"/><line x1="85" y1="1288" x2="1325" y2="1288" stroke="#e3cfc6" stroke-width="30" stroke-linecap="round" stroke-dasharray="150 22"/><line x1="122" y1="85" x2="122" y2="1325" stroke="#e3cfc6" stroke-width="30" stroke-linecap="round" stroke-dasharray="150 22"/><line x1="1302" y1="85" x2="1302" y2="1325" stroke="#e3cfc6" stroke-width="30" stroke-linecap="round" stroke-dasharray="150 22"/><g transform="translate(125,122) scale(1,1)"><path d="M-50 -45L35 30M-35 35L35 -30" stroke="#3a1c14" stroke-width="34" stroke-linecap="round"/><path d="M-50 -45L35 30M-35 35L35 -30" stroke="#a85a3a" stroke-width="16" stroke-linecap="round"/><path d="M-62 -62L-40 -40" stroke="#ead9d2" stroke-width="14" stroke-linecap="round"/></g><g transform="translate(1300,122) scale(-1,1)"><path d="M-50 -45L35 30M-35 35L35 -30" stroke="#3a1c14" stroke-width="34" stroke-linecap="round"/><path d="M-50 -45L35 30M-35 35L35 -30" stroke="#a85a3a" stroke-width="16" stroke-linecap="round"/><path d="M-62 -62L-40 -40" stroke="#ead9d2" stroke-width="14" stroke-linecap="round"/></g><g transform="translate(125,1288) scale(1,-1)"><path d="M-50 -45L35 30M-35 35L35 -30" stroke="#3a1c14" stroke-width="34" stroke-linecap="round"/><path d="M-50 -45L35 30M-35 35L35 -30" stroke="#a85a3a" stroke-width="16" stroke-linecap="round"/><path d="M-62 -62L-40 -40" stroke="#ead9d2" stroke-width="14" stroke-linecap="round"/></g><g transform="translate(1300,1288) scale(-1,-1)"><path d="M-50 -45L35 30M-35 35L35 -30" stroke="#3a1c14" stroke-width="34" stroke-linecap="round"/><path d="M-50 -45L35 30M-35 35L35 -30" stroke="#a85a3a" stroke-width="16" stroke-linecap="round"/><path d="M-62 -62L-40 -40" stroke="#ead9d2" stroke-width="14" stroke-linecap="round"/></g><circle cx="600" cy="95" r="14" fill="#4a2c22"/><circle cx="950" cy="1315" r="14" fill="#4a2c22"/><circle cx="440" cy="1315" r="14" fill="#4a2c22"/><circle cx="95" cy="690" r="14" fill="#4a2c22"/><circle cx="1330" cy="830" r="14" fill="#4a2c22"/><circle cx="1330" cy="280" r="14" fill="#4a2c22"/></g>
<g transform="translate(612,1136) scale(0.11348)"><g clip-path="url(#tclip)"><rect x="140" y="135" width="1145" height="1140" fill="#2a1c17"/><g filter="url(#tb2)"><path d="M700.0 135.0L1285.0 135.0L1285.0 1275.0L790.0 1275.0L760.0 1100.0L740.0 900.0L760.0 700.0L780.0 560.0L720.0 400.0Z" fill="#b47a44" /><path d="M800.0 1020.0C833.3 990.8 919.2 1120.0 1000.0 1100.0C1080.8 1080.0 1237.5 870.8 1285.0 900.0C1332.5 929.2 1365.8 1212.5 1285.0 1275.0C1204.2 1337.5 880.8 1317.5 800.0 1275.0C719.2 1232.5 766.7 1049.2 800.0 1020.0Z" fill="#d8b68c" /><circle cx="1180" cy="790" r="85" fill="#e0b890" /><path d="M1000.0 600.0C1016.7 556.7 1152.5 483.3 1200.0 500.0C1247.5 516.7 1301.7 656.7 1285.0 700.0C1268.3 743.3 1147.5 776.7 1100.0 760.0C1052.5 743.3 983.3 643.3 1000.0 600.0Z" fill="#c08c58" /><path d="M760.0 430.0C790.0 393.3 936.7 445.0 960.0 480.0C983.3 515.0 930.0 603.3 900.0 640.0C870.0 676.7 803.3 735.0 780.0 700.0C756.7 665.0 730.0 466.7 760.0 430.0Z" fill="#5a3a26" /><path d="M690.0 150.0L1100.0 150.0L1000.0 300.0L850.0 380.0L720.0 380.0Z" fill="#b89c72" /><path d="M800.0 160.0C806.7 188.3 833.3 301.7 840.0 330.0" fill="none" stroke="#5a4028" stroke-width="22" stroke-linecap="round" /><path d="M920.0 160.0C916.7 183.3 903.3 276.7 900.0 300.0" fill="none" stroke="#5a4028" stroke-width="18" stroke-linecap="round" /><path d="M1100.0 135.0C1117.5 107.5 1254.2 87.5 1285.0 135.0C1315.8 182.5 1302.5 392.5 1285.0 420.0C1267.5 447.5 1210.8 347.5 1180.0 300.0C1149.2 252.5 1082.5 162.5 1100.0 135.0Z" fill="#8a5a34" /></g><g filter="url(#tb)"><path d="M690.0 430.0C716.7 423.3 798.3 411.7 850.0 390.0C901.7 368.3 954.2 336.7 1000.0 300.0C1045.8 263.3 1104.2 191.7 1125.0 170.0" fill="none" stroke="#2e1c12" stroke-width="112" stroke-linecap="round" /><path d="M690.0 430.0C716.7 423.3 798.3 411.7 850.0 390.0C901.7 368.3 954.2 336.7 1000.0 300.0C1045.8 263.3 1104.2 191.7 1125.0 170.0" fill="none" stroke="#d6c09a" stroke-width="84" stroke-linecap="round" /><path d="M690.0 430.0C716.7 423.3 798.3 411.7 850.0 390.0C901.7 368.3 954.2 336.7 1000.0 300.0C1045.8 263.3 1104.2 191.7 1125.0 170.0" fill="none" stroke="#6a5238" stroke-width="10" stroke-linecap="round" /><path d="M690.0 405.0C716.7 398.3 800.8 385.8 850.0 365.0C899.2 344.2 943.3 314.2 985.0 280.0C1026.7 245.8 1080.8 180.0 1100.0 160.0" fill="none" stroke="#eadcb8" stroke-width="18" stroke-linecap="round" /><path d="M230.0 1040.0C235.0 1011.3 288.3 953.3 330.0 900.0C371.7 846.7 431.7 776.7 480.0 720.0C528.3 663.3 583.3 600.0 620.0 560.0C656.7 520.0 675.8 473.3 700.0 480.0C724.2 486.7 756.3 546.7 765.0 600.0C773.7 653.3 759.2 736.7 752.0 800.0C744.8 863.3 747.3 940.0 722.0 980.0C696.7 1020.0 645.3 1024.7 600.0 1040.0C554.7 1055.3 500.0 1066.7 450.0 1072.0C400.0 1077.3 336.7 1077.3 300.0 1072.0C263.3 1066.7 225.0 1068.7 230.0 1040.0Z" fill="#cdb694" stroke="#1e1410" stroke-width="14"/><path d="M690.0 580.0C675.0 610.0 640.0 701.7 600.0 760.0C560.0 818.3 475.0 901.7 450.0 930.0" fill="none" stroke="#5e4432" stroke-width="70" stroke-linecap="round" /><path d="M330.0 980.0C358.3 966.7 448.3 933.3 500.0 900.0C551.7 866.7 616.7 800.0 640.0 780.0" fill="none" stroke="#efe2c4" stroke-width="40" stroke-linecap="round" /><path d="M560.0 650.0C573.3 635.0 626.7 575.0 640.0 560.0" fill="none" stroke="#e8d8b8" stroke-width="40" stroke-linecap="round" /><path d="M990.0 950.0C1001.7 948.3 1035.0 931.7 1060.0 940.0C1085.0 948.3 1123.3 975.0 1140.0 1000.0C1156.7 1025.0 1156.7 1075.0 1160.0 1090.0" fill="none" stroke="#1a0e0c" stroke-width="26" stroke-linecap="round" /><ellipse cx="1080" cy="1015" rx="95" ry="70" fill="#2a1812" transform="rotate(20 1080 1015)" /><circle cx="1085" cy="1012" r="54" fill="#e28c72" stroke="#1a0e0c" stroke-width="16"/><circle cx="1100" cy="1012" r="16" fill="#6a2a24" /><path d="M900.0 1080.0C913.3 1066.7 1006.7 1086.7 1040.0 1100.0C1073.3 1113.3 1113.3 1146.7 1100.0 1160.0C1086.7 1173.3 993.3 1193.3 960.0 1180.0C926.7 1166.7 886.7 1093.3 900.0 1080.0Z" fill="#c8b4a0" /></g></g><line x1="85" y1="120" x2="1325" y2="120" stroke="#452a21" stroke-width="56" stroke-linecap="round"/><line x1="85" y1="1288" x2="1325" y2="1288" stroke="#452a21" stroke-width="56" stroke-linecap="round"/><line x1="122" y1="85" x2="122" y2="1325" stroke="#452a21" stroke-width="56" stroke-linecap="round"/><line x1="1302" y1="85" x2="1302" y2="1325" stroke="#452a21" stroke-width="56" stroke-linecap="round"/><line x1="85" y1="120" x2="1325" y2="120" stroke="#e3cfc6" stroke-width="30" stroke-linecap="round" stroke-dasharray="150 22"/><line x1="85" y1="1288" x2="1325" y2="1288" stroke="#e3cfc6" stroke-width="30" stroke-linecap="round" stroke-dasharray="150 22"/><line x1="122" y1="85" x2="122" y2="1325" stroke="#e3cfc6" stroke-width="30" stroke-linecap="round" stroke-dasharray="150 22"/><line x1="1302" y1="85" x2="1302" y2="1325" stroke="#e3cfc6" stroke-width="30" stroke-linecap="round" stroke-dasharray="150 22"/><g transform="translate(125,122) scale(1,1)"><path d="M-50 -45L35 30M-35 35L35 -30" stroke="#3a1c14" stroke-width="34" stroke-linecap="round"/><path d="M-50 -45L35 30M-35 35L35 -30" stroke="#a85a3a" stroke-width="16" stroke-linecap="round"/><path d="M-62 -62L-40 -40" stroke="#ead9d2" stroke-width="14" stroke-linecap="round"/></g><g transform="translate(1300,122) scale(-1,1)"><path d="M-50 -45L35 30M-35 35L35 -30" stroke="#3a1c14" stroke-width="34" stroke-linecap="round"/><path d="M-50 -45L35 30M-35 35L35 -30" stroke="#a85a3a" stroke-width="16" stroke-linecap="round"/><path d="M-62 -62L-40 -40" stroke="#ead9d2" stroke-width="14" stroke-linecap="round"/></g><g transform="translate(125,1288) scale(1,-1)"><path d="M-50 -45L35 30M-35 35L35 -30" stroke="#3a1c14" stroke-width="34" stroke-linecap="round"/><path d="M-50 -45L35 30M-35 35L35 -30" stroke="#a85a3a" stroke-width="16" stroke-linecap="round"/><path d="M-62 -62L-40 -40" stroke="#ead9d2" stroke-width="14" stroke-linecap="round"/></g><g transform="translate(1300,1288) scale(-1,-1)"><path d="M-50 -45L35 30M-35 35L35 -30" stroke="#3a1c14" stroke-width="34" stroke-linecap="round"/><path d="M-50 -45L35 30M-35 35L35 -30" stroke="#a85a3a" stroke-width="16" stroke-linecap="round"/><path d="M-62 -62L-40 -40" stroke="#ead9d2" stroke-width="14" stroke-linecap="round"/></g><circle cx="600" cy="95" r="14" fill="#4a2c22"/><circle cx="950" cy="1315" r="14" fill="#4a2c22"/><circle cx="440" cy="1315" r="14" fill="#4a2c22"/><circle cx="95" cy="690" r="14" fill="#4a2c22"/><circle cx="1330" cy="830" r="14" fill="#4a2c22"/><circle cx="1330" cy="280" r="14" fill="#4a2c22"/></g>
<g transform="translate(804,1136) scale(0.11348)"><g clip-path="url(#tclip)"><rect x="140" y="135" width="1145" height="1140" fill="#5e3a24"/><g filter="url(#tb2)"><path d="M140.0 135.0L760.0 135.0L720.0 400.0L700.0 600.0L560.0 780.0L440.0 880.0L140.0 760.0Z" fill="#451a1a" /><path d="M250.0 560.0C276.7 513.3 368.3 513.3 420.0 520.0C471.7 526.7 540.0 556.7 560.0 600.0C580.0 643.3 563.3 736.7 540.0 780.0C516.7 823.3 466.7 856.7 420.0 860.0C373.3 863.3 288.3 850.0 260.0 800.0C231.7 750.0 223.3 606.7 250.0 560.0Z" fill="#7c2a32" /><path d="M140.0 135.0C200.0 90.8 456.7 107.5 500.0 135.0C543.3 162.5 460.0 255.8 400.0 300.0C340.0 344.2 183.3 427.5 140.0 400.0C96.7 372.5 80.0 179.2 140.0 135.0Z" fill="#3c1818" /><path d="M140.0 760.0L300.0 790.0L460.0 880.0L540.0 1050.0L640.0 1275.0L140.0 1275.0Z" fill="#6c6c32" /><path d="M200.0 900.0C216.7 933.3 270.0 1041.7 300.0 1100.0C330.0 1158.3 366.7 1225.0 380.0 1250.0" fill="none" stroke="#8c8c46" stroke-width="40" stroke-linecap="round" /><path d="M900.0 135.0C914.2 99.2 1220.8 70.8 1285.0 135.0C1349.2 199.2 1299.2 484.2 1285.0 520.0C1270.8 555.8 1264.2 414.2 1200.0 350.0C1135.8 285.8 885.8 170.8 900.0 135.0Z" fill="#76502f" /><path d="M900.0 1000.0C977.5 937.5 1220.8 854.2 1285.0 900.0C1349.2 945.8 1362.5 1212.5 1285.0 1275.0C1207.5 1337.5 884.2 1320.8 820.0 1275.0C755.8 1229.2 822.5 1062.5 900.0 1000.0Z" fill="#4e2e1c" /></g><g filter="url(#tb)"><path d="M620.0 660.0C648.3 680.0 670.0 800.0 700.0 850.0C730.0 900.0 770.0 933.3 800.0 960.0C830.0 986.7 870.0 980.0 880.0 1010.0C890.0 1040.0 873.3 1095.8 860.0 1140.0C846.7 1184.2 830.0 1252.5 800.0 1275.0C770.0 1297.5 713.3 1295.8 680.0 1275.0C646.7 1254.2 623.3 1195.8 600.0 1150.0C576.7 1104.2 556.7 1050.0 540.0 1000.0C523.3 950.0 501.7 895.0 500.0 850.0C498.3 805.0 510.0 761.7 530.0 730.0C550.0 698.3 591.7 640.0 620.0 660.0Z" fill="#ddd2b6" stroke="#2a2018" stroke-width="12"/><path d="M620.0 820.0C638.3 830.0 676.7 913.3 700.0 960.0C723.3 1006.7 756.7 1063.3 760.0 1100.0C763.3 1136.7 740.0 1190.0 720.0 1180.0C700.0 1170.0 661.7 1086.7 640.0 1040.0C618.3 993.3 593.3 936.7 590.0 900.0C586.7 863.3 601.7 810.0 620.0 820.0Z" fill="#4c4540" filter="url(#tb3)"/><path d="M650.0 590.0C663.3 576.7 718.3 615.0 760.0 640.0C801.7 665.0 851.7 703.3 900.0 740.0C948.3 776.7 1007.5 823.3 1050.0 860.0C1092.5 896.7 1143.3 934.7 1155.0 960.0C1166.7 985.3 1149.2 1008.7 1120.0 1012.0C1090.8 1015.3 1026.7 995.3 980.0 980.0C933.3 964.7 880.0 945.0 840.0 920.0C800.0 895.0 766.7 863.3 740.0 830.0C713.3 796.7 695.0 760.0 680.0 720.0C665.0 680.0 636.7 603.3 650.0 590.0Z" fill="#ddd2b6" stroke="#2a2018" stroke-width="12"/><path d="M720.0 680.0C736.7 678.3 813.3 743.3 860.0 780.0C906.7 816.7 993.3 883.3 1000.0 900.0C1006.7 916.7 940.0 898.3 900.0 880.0C860.0 861.7 790.0 823.3 760.0 790.0C730.0 756.7 703.3 681.7 720.0 680.0Z" fill="#4c4540" filter="url(#tb3)"/><path d="M700.0 200.0C726.7 175.0 796.7 198.3 850.0 210.0C903.3 221.7 968.3 248.3 1020.0 270.0C1071.7 291.7 1124.7 315.0 1160.0 340.0C1195.3 365.0 1225.3 383.3 1232.0 420.0C1238.7 456.7 1222.0 526.7 1200.0 560.0C1178.0 593.3 1140.0 606.3 1100.0 620.0C1060.0 633.7 1003.3 647.0 960.0 642.0C916.7 637.0 875.0 613.7 840.0 590.0C805.0 566.3 775.0 538.3 750.0 500.0C725.0 461.7 698.3 410.0 690.0 360.0C681.7 310.0 673.3 225.0 700.0 200.0Z" fill="#ddd2b6" stroke="#2a2018" stroke-width="12"/><path d="M760.0 300.0C780.0 291.7 850.0 333.3 900.0 350.0C950.0 366.7 1043.3 380.0 1060.0 400.0C1076.7 420.0 1033.3 463.3 1000.0 470.0C966.7 476.7 896.7 451.7 860.0 440.0C823.3 428.3 796.7 423.3 780.0 400.0C763.3 376.7 740.0 308.3 760.0 300.0Z" fill="#4c4540" filter="url(#tb3)"/><path d="M800.0 520.0C826.7 531.7 906.7 586.7 960.0 590.0C1013.3 593.3 1093.3 548.3 1120.0 540.0" fill="none" stroke="#f2ead6" stroke-width="30" stroke-linecap="round" /></g></g><line x1="85" y1="120" x2="1325" y2="120" stroke="#452a21" stroke-width="56" stroke-linecap="round"/><line x1="85" y1="1288" x2="1325" y2="1288" stroke="#452a21" stroke-width="56" stroke-linecap="round"/><line x1="122" y1="85" x2="122" y2="1325" stroke="#452a21" stroke-width="56" stroke-linecap="round"/><line x1="1302" y1="85" x2="1302" y2="1325" stroke="#452a21" stroke-width="56" stroke-linecap="round"/><line x1="85" y1="120" x2="1325" y2="120" stroke="#e3cfc6" stroke-width="30" stroke-linecap="round" stroke-dasharray="150 22"/><line x1="85" y1="1288" x2="1325" y2="1288" stroke="#e3cfc6" stroke-width="30" stroke-linecap="round" stroke-dasharray="150 22"/><line x1="122" y1="85" x2="122" y2="1325" stroke="#e3cfc6" stroke-width="30" stroke-linecap="round" stroke-dasharray="150 22"/><line x1="1302" y1="85" x2="1302" y2="1325" stroke="#e3cfc6" stroke-width="30" stroke-linecap="round" stroke-dasharray="150 22"/><g transform="translate(125,122) scale(1,1)"><path d="M-50 -45L35 30M-35 35L35 -30" stroke="#3a1c14" stroke-width="34" stroke-linecap="round"/><path d="M-50 -45L35 30M-35 35L35 -30" stroke="#a85a3a" stroke-width="16" stroke-linecap="round"/><path d="M-62 -62L-40 -40" stroke="#ead9d2" stroke-width="14" stroke-linecap="round"/></g><g transform="translate(1300,122) scale(-1,1)"><path d="M-50 -45L35 30M-35 35L35 -30" stroke="#3a1c14" stroke-width="34" stroke-linecap="round"/><path d="M-50 -45L35 30M-35 35L35 -30" stroke="#a85a3a" stroke-width="16" stroke-linecap="round"/><path d="M-62 -62L-40 -40" stroke="#ead9d2" stroke-width="14" stroke-linecap="round"/></g><g transform="translate(125,1288) scale(1,-1)"><path d="M-50 -45L35 30M-35 35L35 -30" stroke="#3a1c14" stroke-width="34" stroke-linecap="round"/><path d="M-50 -45L35 30M-35 35L35 -30" stroke="#a85a3a" stroke-width="16" stroke-linecap="round"/><path d="M-62 -62L-40 -40" stroke="#ead9d2" stroke-width="14" stroke-linecap="round"/></g><g transform="translate(1300,1288) scale(-1,-1)"><path d="M-50 -45L35 30M-35 35L35 -30" stroke="#3a1c14" stroke-width="34" stroke-linecap="round"/><path d="M-50 -45L35 30M-35 35L35 -30" stroke="#a85a3a" stroke-width="16" stroke-linecap="round"/><path d="M-62 -62L-40 -40" stroke="#ead9d2" stroke-width="14" stroke-linecap="round"/></g><circle cx="600" cy="95" r="14" fill="#4a2c22"/><circle cx="950" cy="1315" r="14" fill="#4a2c22"/><circle cx="440" cy="1315" r="14" fill="#4a2c22"/><circle cx="95" cy="690" r="14" fill="#4a2c22"/><circle cx="1330" cy="830" r="14" fill="#4a2c22"/><circle cx="1330" cy="280" r="14" fill="#4a2c22"/></g>
<g transform="translate(996,1136) scale(0.11348)"><rect x="130" y="130" width="1150" height="1130" rx="60" fill="url(#furg)"/><g filter="url(#tb2)"><path d="M160.0 330.0C216.7 318.3 376.7 258.3 500.0 260.0C623.3 261.7 775.0 333.3 900.0 340.0C1025.0 346.7 1191.7 306.7 1250.0 300.0" fill="none" stroke="#5e5248" stroke-width="80" stroke-linecap="round" opacity="0.6"/><path d="M160.0 760.0C216.7 750.0 393.3 690.0 500.0 700.0C606.7 710.0 675.0 806.7 800.0 820.0C925.0 833.3 1175.0 786.7 1250.0 780.0" fill="none" stroke="#bcb2a2" stroke-width="80" stroke-linecap="round" opacity="0.7"/><path d="M160.0 1060.0C216.7 1050.0 376.7 993.3 500.0 1000.0C623.3 1006.7 775.0 1093.3 900.0 1100.0C1025.0 1106.7 1191.7 1050.0 1250.0 1040.0" fill="none" stroke="#ece6d8" stroke-width="90" stroke-linecap="round" opacity="0.8"/></g><rect x="115" y="115" width="1180" height="1160" rx="70" fill="none" stroke="#2e1408" stroke-width="84"/><rect x="115" y="115" width="1180" height="1160" rx="70" fill="none" stroke="#8a4a22" stroke-width="52"/><rect x="108" y="108" width="1194" height="1174" rx="76" fill="none" stroke="#c98a58" stroke-width="11" stroke-dasharray="110 70" opacity="0.85"/><path d="M700.0 1330.0C716.7 1323.3 766.7 1296.7 800.0 1290.0C833.3 1283.3 883.3 1290.0 900.0 1290.0" fill="none" stroke="#2e1408" stroke-width="56" stroke-linecap="round" /><path d="M700.0 1330.0C716.7 1323.3 766.7 1296.7 800.0 1290.0C833.3 1283.3 883.3 1290.0 900.0 1290.0" fill="none" stroke="#8a4a22" stroke-width="34" stroke-linecap="round" /><path d="M760.0 90.0C780.0 85.0 846.7 63.3 880.0 60.0C913.3 56.7 946.7 68.3 960.0 70.0" fill="none" stroke="#2e1408" stroke-width="46" stroke-linecap="round" /><path d="M760.0 90.0C780.0 85.0 846.7 63.3 880.0 60.0C913.3 56.7 946.7 68.3 960.0 70.0" fill="none" stroke="#8a4a22" stroke-width="26" stroke-linecap="round" /><path d="M60.0 900.0C65.0 916.7 83.3 975.0 90.0 1000.0C96.7 1025.0 98.3 1041.7 100.0 1050.0" fill="none" stroke="#2e1408" stroke-width="36" stroke-linecap="round" /><path d="M60.0 900.0C65.0 916.7 83.3 975.0 90.0 1000.0C96.7 1025.0 98.3 1041.7 100.0 1050.0" fill="none" stroke="#8a4a22" stroke-width="20" stroke-linecap="round" /><ellipse cx="1335" cy="275" rx="26" ry="60" fill="#e0a030" transform="rotate(10 1335 275)" stroke="#5a3008" stroke-width="8"/><ellipse cx="75" cy="600" rx="26" ry="55" fill="#e0a030" transform="rotate(-20 75 600)" stroke="#5a3008" stroke-width="8"/><ellipse cx="1330" cy="1195" rx="24" ry="50" fill="#e0a030" transform="rotate(15 1330 1195)" stroke="#5a3008" stroke-width="8"/></g>
</svg>
<!--/THUMBS-->
</div></div>
</body>
</html>
